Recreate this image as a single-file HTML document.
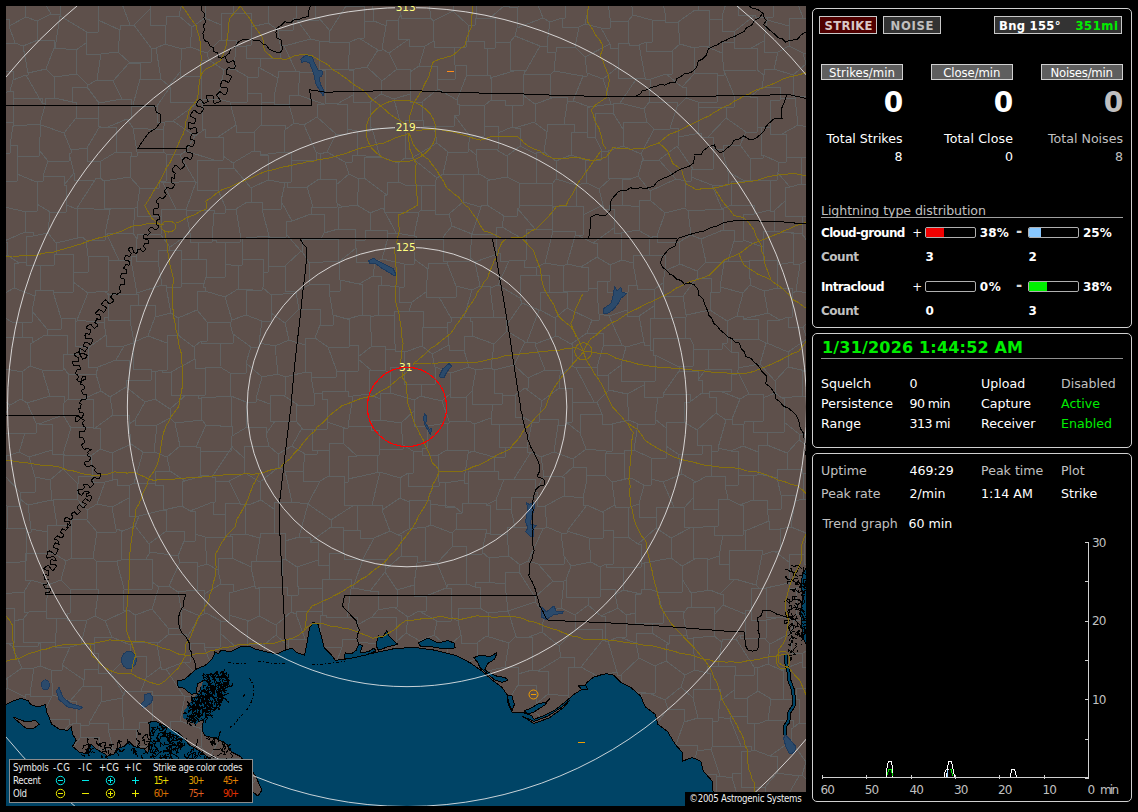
<!DOCTYPE html>
<html><head><meta charset="utf-8"><title>Lightning Detector</title>
<style>
html,body{margin:0;padding:0;background:#000;}
body{width:1138px;height:812px;position:relative;overflow:hidden;font-family:"DejaVu Sans","Liberation Sans",sans-serif;}
.t{position:absolute;white-space:pre;line-height:normal;margin:0;padding:0;}
.b{position:absolute;box-sizing:content-box;}
.panel{position:absolute;border:1px solid #d0d0d0;border-radius:5px;background:#000;}
svg{position:absolute;display:block;}
</style></head><body>
<svg style="left:0;top:0" width="1138" height="812" viewBox="0 0 1138 812" shape-rendering="crispEdges">
<defs><clipPath id="mc"><rect x="6" y="6" width="800" height="800"/></clipPath></defs>
<rect x="6" y="6" width="800" height="800" fill="#5e504b"/>
<g clip-path="url(#mc)" fill="none" stroke-width="1" stroke-linejoin="round">
<path d="M-6 446L7 456M25 433L19 452M25 433L3 433L3 419M3 419L-5 424M7 456L19 452M3 419L10 405M-10 392L10 405M6 679L-8 669M6 679L7 679L7 688M7 688L-3 702M-13 500L0 475M0 475L-25 474M3 474L7 456M3 474L0 474L0 475M7 785L6 803M7 785L-13 785L-13 775M6 803L-11 811M-13 775L5 752M5 752L-18 752L-18 740M6 803L18 809M18 809L22 824M372 505L380 472M372 505L382 505L382 510M380 472L400 478M382 510L400 498M400 478L400 498M12 646L38 646L38 643M12 646L22 668M38 643L40 643L40 666M22 668L34 668L34 668M34 668L40 666M6 679L22 668M-9 649L8 643M8 643L12 646M-9 535L3 528M-13 500L7 506M3 528L7 528L7 506M3 474L20 492M20 492L20 492L20 499M7 506L20 506L20 499M372 505L357 506M382 510L390 531M390 531L374 538M374 538L360 538L360 530M360 530L357 530L357 506M7 785L24 785L24 777M18 809L30 798M30 798L24 798L24 777M679 371L698 371L698 380M679 371L663 394M663 394L690 394L690 402M698 380L702 380L702 393M690 402L702 393M698 380L706 369M702 393L709 393L709 397M720 391L709 391L709 397M720 391L731 391L731 374M706 369L731 369L731 374M764 291L768 313M764 291L778 288M788 317L792 317L792 294M788 317L780 320M780 320L768 313M778 288L792 288L792 294M820 295L796 291M803 327L819 310M803 327L788 327L788 317M796 291L792 294M819 129L798 125M813 157L786 157L786 150M798 125L782 134M782 134L786 134L786 150M-5 175L5 181M5 181L-0 181L-0 206M25 433L36 433L36 423M21 399L10 405M21 399L27 403M27 403L36 423M19 452L29 457M36 423L39 423L39 424M39 424L52 424L52 450M52 450L29 457M20 492L35 492L35 477M29 457L35 477M22 337L32 337L32 343M22 337L-5 337L-5 350M32 343L30 343L30 366M-5 350L6 369M6 369L22 372M22 372L30 366M12 322L32 322L32 311M12 322L22 322L22 337M45 335L32 343M45 335L47 335L47 329M47 329L32 311M12 322L0 315M-3 317L0 317L0 315M45 335L67 335L67 354M42 370L63 370L63 367M42 370L30 366M67 354L63 354L63 367M-4 376L6 369M21 399L22 399L22 372M42 370L50 396M50 396L27 403M251 504L261 500M251 504L245 504L245 534M273 533L260 533L260 538M273 533L274 533L274 509M245 534L260 538M261 500L274 509M240 503L229 481M240 503L225 503L225 514M225 514L213 514L213 502M213 502L215 502L215 481M229 481L215 481M251 504L240 504L240 503M261 500L260 500L260 482M260 482L245 473M229 481L245 473M608 773L610 773L610 747M608 773L628 781M628 741L610 741L610 747M628 741L642 753M642 753L639 753L639 771M628 781L639 781L639 771M642 753L660 753L660 746M673 773L671 773L671 748M673 773L652 773L652 777M660 746L671 746L671 748M652 777L639 777L639 771M655 726L668 709M655 726L660 726L660 746M668 709L684 709L684 722M671 748L676 745M676 745L684 722M166 531L149 544M166 531L184 531L184 541M150 552L149 544M150 552L178 556M184 541L178 556M353 588L370 591M353 588L351 589M351 589L347 617M370 591L378 591L378 610M347 617L357 617L357 625M357 625L372 617M378 610L372 617M5 752L6 752M-2 716L13 725M6 752L13 725M24 777L25 774M25 774L6 774L6 752M6 752L6 752L6 752M43 802L57 802L57 794M43 802L40 802L40 823M65 799L66 830M65 799L57 794M30 798L43 798L43 802M25 774L44 774L44 767M54 782L44 767M54 782L57 794M430 504L431 525M430 504L455 507M431 525L452 533M455 507L462 513M462 513L456 513L456 529M456 529L452 533M390 531L398 535M400 498L409 502M409 502L409 529M409 529L398 535M428 500L409 500L409 502M428 500L430 500L430 504M431 525L426 527M409 529L426 527M651 458L634 450M651 458L666 458L666 446M634 450L638 424M666 446L666 428M666 428L655 419M638 424L655 424L655 419M658 397L655 419M658 397L663 397L663 394M690 402L684 402L684 422M684 422L666 422L666 428M606 451L607 453M606 451L612 451L612 424M612 424L629 420M629 420L638 424M634 450L624 450L624 454M607 453L624 454M612 482L605 475M612 482L615 505M605 475L586 475L586 484M615 505L602 512M602 512L587 505M586 484L583 498M587 505L583 505L583 498M631 478L624 478L624 454M631 478L612 482M607 453L605 453L605 475M606 451L586 449M586 449L573 459M573 459L573 459L573 467M573 467L586 467L586 484M674 507L663 482M674 507L656 507L656 517M656 517L639 517L639 504M639 504L644 485M644 485L651 485L651 479M663 482L651 479M630 507L639 504M630 507L615 507L615 505M631 478L644 485M651 458L651 458L651 479M682 474L678 454M682 474L663 482M678 454L666 446M827 636L809 636L809 616M829 603L809 603L809 616M714 526L693 528M714 526L718 526L718 509M718 509L693 509L693 498M692 527L693 527L693 528M692 527L684 527L684 508M684 508L693 498M707 476L696 482M707 476L725 476L725 485M696 482L693 482L693 498M728 499L725 485M728 499L718 499L718 509M656 528L656 517M656 528L671 538M671 538L692 527M674 507L684 507L684 508M682 474L696 482M671 538L671 538L671 558M697 558L682 566M697 558L693 558L693 528M671 558L682 566M821 564L804 564L804 554M804 554L806 533M806 533L814 530M788 469L787 469L787 453M788 469L777 469L777 478M787 453L767 445M777 478L759 474M759 474L758 474L758 452M767 445L758 445L758 452M768 432L784 432L784 422M768 432L767 432L767 445M799 440L787 453M799 440L799 434M799 434L784 422M743 446L731 451M743 446L758 452M731 451L738 451L738 475M738 475L757 475M757 475L759 474M768 432L753 432L753 421M743 446L744 424M753 421L744 421L744 424M728 499L740 505M725 485L738 485L738 475M757 475L753 475L753 500M740 505L753 500M723 535L714 535L714 526M723 535L743 535L743 530M740 505L743 505L743 530M825 70L806 64M806 64L803 53M803 53L819 53L819 32M798 125L795 98M812 96L797 96M795 98L797 96M806 64L793 75M797 96L793 96L793 75M544 476L562 476L562 477M544 476L535 492M562 477L564 477L564 496M564 496L545 506M545 506L537 506L537 497M535 492L537 492L537 497M541 457L544 476M541 457L554 452M554 452L573 459M573 467L562 477M541 457L531 452M531 452L514 479M514 479L535 479L535 492M583 498L564 496M477 503L462 503L462 513M477 503L468 503L468 483M468 483L464 483L464 480M455 507L445 507L445 483M464 480L445 483M708 349L722 349L722 343M708 349L693 349L693 344M722 343L727 343L727 321M727 321L710 310M710 310L686 315M693 344L690 338M690 338L685 338L685 317M685 317L686 317L686 315M677 366L679 366L679 371M677 366L693 366L693 344M706 369L708 369L708 349M737 316L743 316L743 319M737 316L727 321M743 319L758 319L758 339M758 339L731 339L731 352M731 352L722 343M753 421L763 421L763 398M744 424L732 424L732 419M740 399L732 419M740 399L749 394M749 394L763 394L763 398M720 391L740 399M731 374L737 374L737 370M749 394L737 370M731 352L738 352L738 368M737 370L738 370L738 368M782 398L784 398L784 422M782 398L775 393M775 393L763 398M810 400L818 400L818 418M810 400L829 387M782 398L802 396M802 396L810 396L810 400M799 434L818 434L818 418M818 363L806 371M806 371L802 371L802 396M799 440L812 449M830 445L812 449M702 445L697 445L697 430M702 445L711 445L711 451M711 451L718 451L718 448M718 448L726 420M697 430L716 413M716 413L726 420M684 422L697 430M678 454L702 454L702 445M707 476L711 476L711 451M731 451L718 448M732 419L726 420M709 397L716 397L716 413M683 296L697 278M683 296L686 315M710 310L711 292M697 278L711 278L711 292M701 239L706 262M701 239L691 235M691 235L679 242M679 242L680 264M680 264L697 271M697 271L706 262M688 211L722 209M688 211L691 235M701 239L723 230M722 209L723 209L723 230M750 180L777 180L777 172M750 180L750 158M777 172L778 172L778 162M778 162L763 155M750 158L763 158L763 155M22 211L-0 206M22 211L25 211L25 232M-6 235L2 235L2 242M2 242L25 232M40 265L54 265L54 254M40 265L26 265L26 262M48 233L56 243M48 233L33 236M33 236L26 236L26 262M54 254L56 254L56 243M-11 271L7 255M-9 284L5 284L5 293M19 263L7 255M19 263L14 263L14 288M14 288L5 293M2 242L7 242L7 255M0 315L5 315L5 293M25 232L33 232L33 236M26 262L19 262L19 263M49 290L35 290L35 296M49 290L40 290L40 265M35 296L14 288M35 296L32 311M81 644L94 644L94 653M81 644L87 620M112 637L94 637L94 653M112 637L105 621M105 621L95 616M87 620L95 616M81 644L70 647M70 647L55 647L55 633M55 633L56 633L56 618M56 618L67 618L67 613M87 620L67 620L67 613M112 637L130 645M105 621L128 610M135 642L130 645M135 642L135 642L135 615M135 615L128 610M95 616L98 594M67 613L70 613L70 589M70 589L93 589M93 589L98 589L98 594M128 610L123 610L123 590M98 594L123 594L123 590M163 510L166 510L166 531M163 510L139 516M149 544L135 526M135 526L139 516M185 481L170 471M185 481L182 481L182 506M170 471L155 471L155 485M155 485L163 485L163 510M163 510L182 506M190 511L213 502M190 511L182 506M205 475L185 481M205 475L212 477M212 477L215 477L215 481M163 510L163 510L163 510M134 483L130 485M134 483L155 483L155 485M130 485L129 485L129 498M139 516L129 516L129 498M190 511L195 511L195 534M184 541L195 541L195 534M143 452L134 483M143 452L154 452L154 452M170 471L167 457M154 452L167 457M205 475L200 475L200 451M196 447L200 447L200 451M196 447L180 446M167 457L180 446M202 420L175 423M202 420L206 425M206 425L196 447M180 446L175 423M97 504L112 507M97 504L105 482M130 485L117 485L117 479M129 498L112 507M105 482L117 479M143 452L131 444M117 479L112 479L112 453M131 444L112 453M105 482L93 482L93 476M93 476L91 456M91 456L100 449M100 449L112 453M83 399L93 399L93 427M83 399L68 399L68 399M64 403L63 415M64 403L68 399M63 415L71 428M71 428L93 427M69 375L68 375L68 399M69 375L96 374M96 374L101 391M101 391L83 399M50 396L64 396L64 403M39 424L63 415M63 367L69 375M63 454L52 454L52 450M63 454L71 428M63 454L64 454L64 455M64 455L91 456M95 428L100 428L100 449M95 428L93 428L93 427M202 420L201 420L201 398M201 398L231 396M206 425L220 425L220 426M220 426L231 426L231 396M231 396L231 396L231 396M220 367L221 343M220 367L205 368M205 368L195 368L195 359M221 343L201 343L201 341M195 359L194 359L194 347M201 341L194 347M201 398L198 398L198 395M198 395L205 395L205 368M230 373L231 396M230 373L220 367M186 395L198 395L198 395M186 395L171 395L171 372M171 372L195 359M505 667L509 643M505 667L518 667L518 674M509 643L516 636M529 637L516 637L516 636M529 637L532 637L532 670M518 674L532 670M561 657L574 657L574 667M561 657L538 671M574 667L568 667L568 696M538 671L548 671L548 694M568 696L548 694M658 800L639 800L639 806M658 800L666 800L666 802M666 802L665 827M640 824L639 806M658 800L652 777M628 781L630 798M630 798L639 798L639 806M630 507L628 507L628 537M656 528L638 544M638 544L628 537M652 623L663 623L663 611M652 623L652 633M663 611L683 611L683 614M683 614L687 635M687 635L669 635L669 644M669 644L652 633M665 700L681 687M665 700L649 693M649 693L655 693L655 666M655 666L666 661M666 661L685 675M681 687L685 675M693 638L687 638L687 635M693 638L695 670M669 644L666 644L666 661M685 675L695 670M663 611L657 592M683 614L688 607M657 592L682 592L682 579M682 579L691 593M688 607L691 607L691 593M735 579L729 579L729 564M735 579L720 594M720 594L710 590M710 590L707 590L707 560M729 564L719 564L719 556M719 556L707 560M756 585L735 579M756 585L762 555M752 550L762 550L762 555M752 550L729 550L729 564M697 558L707 558L707 560M682 579L682 566M691 593L710 590M723 535L719 556M752 550L745 550L745 531M743 530L745 530L745 531M492 670L478 670L478 658M492 670L483 689M483 689L468 688M468 688L458 688L458 666M478 658L458 666M505 667L492 670M509 643L486 636M477 643L486 636M477 643L478 658M453 546L452 533M453 546L437 563M426 527L425 527L425 561M437 563L425 561M453 546L466 546L466 554M467 584L466 584L466 554M467 584L447 584L447 587M437 563L447 587M273 533L285 533L285 541M292 502L274 502L274 509M292 502L308 504M308 504L299 537M285 541L299 537M331 527L310 542M331 527L343 527L343 545M344 553L343 545M344 553L329 553L329 565M310 542L318 542L318 560M329 565L318 565L318 560M331 520L331 527M331 520L308 504M308 504L308 504L308 504M299 537L310 537L310 542M360 530L343 530L343 545M354 505L357 505L357 506M354 505L331 520M374 538L363 559M363 559L363 559L363 559M363 559L344 559L344 553M363 559L353 588M329 579L351 579L351 589M329 579L329 565M225 514L225 514L225 532M195 534L205 537M205 537L225 537L225 532M245 534L230 534L230 536M230 536L225 536L225 532M183 695L152 695L152 700M183 695L166 669M166 669L161 669L161 667M161 667L146 678M146 678L141 691M141 691L152 691L152 700M128 656L130 656L130 645M128 656L146 656L146 678M135 642L157 642L157 644M157 644L161 667M38 642L38 643M38 642L55 642L55 633M70 647L62 665M40 666L51 670M51 670L62 670L62 665M802 473L813 473L813 470M802 473L803 473L803 499M803 499L817 499L817 502M812 449L813 470M788 469L802 469L802 473M547 527L543 529M547 527L545 506M543 529L515 527M537 497L511 497L511 509M515 527L511 509M504 479L514 479L514 479M504 479L496 500M511 509L496 509L496 500M504 479L498 479L498 471M477 503L486 503L486 505M498 471L468 471L468 483M496 500L486 505M508 611L535 602M508 611L516 636M529 637L542 632M535 602L544 612M544 612L542 632M561 657L559 646M538 671L532 670M559 646L542 632M484 582L475 582L475 587M484 582L505 584M475 587L480 587L480 608M505 584L508 611M508 611L488 613M488 613L480 608M508 611L508 611M535 602L535 597M535 597L519 572M519 572L505 572L505 584M486 636L488 636L488 613M477 643L461 643L461 635M480 608L458 608L458 621M458 621L461 635M836 664L808 664L808 667M808 667L802 667L802 662M827 636L803 653M803 653L802 662M812 688L796 688L796 699M812 688L827 695M796 699L799 699L799 723M799 723L823 724M812 688L808 667M718 666L735 666L735 675M718 666L722 642M735 675L754 675L754 667M754 667L736 639M736 639L722 639L722 642M718 666L707 666L707 673M693 638L714 636M707 673L695 670M722 642L714 636M688 607L714 607L714 615M714 636L714 615M720 594L723 594L723 605M723 605L714 615M794 620L800 620L800 614M794 620L781 617M800 614L796 614L796 588M781 617L766 617L766 588M796 588L789 588L789 583M789 583L766 588M809 616L800 614M803 653L791 653L791 633M791 633L794 620M816 581L796 588M804 554L789 554L789 562M789 562L789 562L789 583M789 562L774 551M774 551L762 555M759 588L766 588L766 588M759 588L756 585M671 558L644 563M657 592L650 589M650 589L644 589L644 563M638 544L641 544L641 561M644 563L641 563L641 561M780 529L769 529L769 521M780 529L791 527M791 527L795 501M769 521L767 509M767 509L781 509L781 495M781 495L795 495L795 501M774 551L780 551L780 529M745 531L769 521M806 533L791 527M803 499L795 501M753 500L767 500L767 509M777 478L781 495M803 18L815 22M803 18L789 18L789 26M803 53L789 46M789 46L789 26M663 3L649 -8M663 3L681 3L681 -16M750 97L762 87M750 97L757 97L757 127M762 87L780 87L780 100M780 100L770 100L770 127M770 127L761 127L761 128M757 127L761 127L761 128M724 107L726 107L726 118M724 107L734 107L734 95M726 118L746 132M734 95L750 97M746 132L757 132L757 127M782 134L770 134L770 127M795 98L780 98L780 100M778 162L786 162L786 150M763 155L761 155L761 128M750 158L740 145M740 145L746 132M766 17L755 17L755 15M766 17L773 17L773 0M755 15L738 15L738 -6M759 -22L773 -22L773 0M803 18L794 -7M766 17L767 17L767 20M767 20L789 26M773 0L794 -7M195 -6L182 -6L182 2M182 2L162 2L162 -4M-5 1L1 1L1 -6M428 500L433 486M400 478L408 473M433 486L408 486L408 473M445 483L439 482M433 486L439 486L439 482M688 211L685 208M685 208L665 213M679 242L657 242L657 236M657 236L665 213M260 482L279 467M292 502L285 471M279 467L285 471M247 427L232 436M247 427L266 427L266 434M269 446L266 434M269 446L244 446L244 458M244 458L232 447M232 436L231 436L231 446M231 446L232 446L232 447M220 426L232 426L232 436M246 402L231 396M246 402L247 427M245 473L244 473L244 458M278 454L279 467M278 454L269 446M212 477L232 447M200 451L231 451L231 446M454 47L466 47L466 41M454 47L434 47L434 41M466 41L468 41L468 25M434 41L433 21M433 21L453 11M453 11L468 25M171 372L162 372L162 370M162 370L167 370L167 343M194 347L178 335M178 335L167 335L167 343M198 259L181 259L181 259M198 259L206 259L206 277M181 259L181 259L181 283M181 283L203 283L203 287M206 277L203 287M169 250L181 250L181 259M169 250L170 247M204 242L190 242L190 233M204 242L198 242L198 259M190 233L170 247M169 250L158 250L158 261M158 261L162 285M162 285L166 285L166 287M166 287L181 287L181 283M204 242L212 242L212 240M212 240L216 240L216 242M206 277L225 277L225 264M216 242L225 242L225 264M67 354L80 354L80 346M98 367L96 374M98 367L88 367L88 348M88 348L80 346M47 329L61 329L61 318M49 290L53 290L53 292M53 292L61 318M80 346L75 346L75 321M61 318L75 318L75 321M137 207L135 208M137 207L140 188M135 208L111 208M111 208L104 208L104 181M104 181L130 177M140 188L130 177M803 327L807 339M816 345L807 339M760 364L775 381M760 364L766 343M767 343L766 343M767 343L788 352M788 352L788 367M788 367L775 381M738 368L760 364M775 393L775 381M758 339L766 343M780 320L767 320L767 343M768 313L743 319M807 339L788 352M806 371L788 367M811 216L819 214M811 216L785 216L785 201M819 214L811 189M790 187L785 187L785 201M790 187L801 184M801 184L811 184L811 189M834 185L811 189M813 157L801 157L801 184M777 172L790 187M802 234L814 250M802 234L780 232M780 232L793 232L793 262M814 257L800 264M800 264L793 264L793 262M811 216L802 216L802 234M796 291L800 264M778 288L777 265M777 265L793 262M728 261L724 261L724 263M728 261L749 261L749 278M724 263L720 287M720 287L743 293M749 278L750 278L750 285M750 285L743 293M706 262L724 263M723 230L734 230L734 241M734 241L728 261M697 278L697 278L697 271M711 292L720 292L720 287M737 316L743 293M764 291L750 285M765 260L777 260L777 265M765 260L749 260L749 278M724 107L698 107L698 102M726 118L708 137M708 137L701 137L701 133M701 133L698 133L698 102M682 87L686 87L686 98M682 87L666 74M649 102L677 102L677 107M649 102L651 79M666 74L651 79M677 107L686 98M682 87L695 73M686 98L698 102M698 102L717 102L717 75M695 73L717 73L717 75M734 95L724 71M724 71L724 71M698 102L698 102M717 75L724 75L724 71M754 214L770 210M754 214L743 214L743 240M779 231L763 231L763 247M779 231L774 231L774 211M774 211L770 211L770 210M763 247L743 240M745 181L749 180M745 181L731 181L731 205M749 180L770 180L770 210M731 205L754 205L754 214M722 209L722 209M722 209L731 205M734 241L743 241L743 240M765 260L763 260L763 247M780 232L779 231M785 201L774 211M750 180L749 180M26 17L25 -8M26 17L37 21M38 -9L51 14M37 21L51 14M158 261L136 261L136 256M162 285L137 293M137 293L131 260M136 256L131 256L131 260M170 247L160 234M160 234L137 234L137 239M136 256L137 239M160 234L161 234L161 216M161 216L137 216L137 207M135 208L133 233M137 239L133 233M52 500L53 500M52 500L50 480M53 500L77 499M50 480L63 469M63 469L78 484M78 484L77 484L77 499M20 499L28 505M35 477L50 480M28 505L52 500M86 519L87 519L87 510M86 519L71 519L71 526M87 510L77 499M71 526L57 525M57 525L53 500M64 455L63 469M93 476L78 476L78 484M97 504L87 510M135 615L152 609M157 644L169 634M169 634L168 634L168 628M168 628L152 609M72 558L71 558L71 526M72 558L93 558M86 519L97 532M93 558L97 532M112 507L116 529M97 532L116 532L116 529M135 526L123 531M116 529L123 531M124 589L117 562M124 589L152 589L152 582M146 559L121 559L121 560M146 559L152 559L152 582M121 560L117 560L117 562M93 589L96 589L96 561M123 590L124 590L124 589M96 561L117 561L117 562M152 609L159 587M159 587L152 582M150 552L146 559M123 531L121 531L121 560M178 556L180 562M180 562L169 586M169 586L159 587M93 558L96 561M8 643L14 643L14 621M-6 608L14 608L14 621M38 642L23 642L23 619M14 621L23 619M56 618L46 618L46 611M46 611L29 612M23 619L29 612M70 589L61 580M46 611L48 585M48 585L61 580M72 558L66 561M61 580L66 561M186 395L170 409M162 370L158 371M158 371L155 371L155 399M155 399L170 409M154 452L157 425M175 423L170 418M157 425L170 418M170 409L170 409L170 418M113 415L129 415L129 424M113 415L110 397M110 397L126 387M126 387L145 402M145 402L135 420M129 424L135 420M131 444L129 424M95 428L113 415M101 391L110 397M98 367L116 360M116 360L129 360L129 380M129 380L126 380L126 387M158 371L151 371L151 369M129 380L151 380L151 369M155 399L145 402M157 425L135 425L135 420M216 242L240 242L240 233M225 264L231 265M246 238L242 238L242 259M246 238L240 238L240 233M231 265L242 265L242 259M596 719L588 719L588 702M596 719L574 728M588 702L569 702L569 698M569 698L565 715M574 728L565 728L565 715M665 700L668 709M655 726L641 726L641 722M649 693L646 693M646 693L641 693L641 722M628 741L629 741L629 727M601 742L610 742L610 747M601 742L599 721M599 721L618 721L618 713M618 713L629 727M641 722L629 727M518 674L518 674L518 685M548 694L536 704M518 685L536 685L536 704M484 690L483 690L483 689M484 690L504 690L504 707M518 685L504 707M568 696L569 698M547 723L534 711M547 723L565 715M534 711L536 704M472 724L484 690M472 724L501 724L501 723M504 707L507 707L507 718M501 723L507 718M534 711L514 720M514 720L507 718M547 723L545 743M514 720L530 720L530 747M545 743L530 747M547 527L561 533M587 505L567 531M561 533L567 533L567 531M600 567L591 562M600 567L606 564M606 564L613 564L613 538M591 562L589 538M589 538L603 538L603 530M603 530L613 530L613 538M628 537L613 538M625 567L641 567L641 561M625 567L606 567L606 564M602 512L603 512L603 530M567 531L589 538M652 633L636 633L636 643M655 666L639 658M639 658L636 643M408 617L394 607M408 617L406 633M394 607L378 610M372 617L396 617L396 642M406 633L396 642M359 642L357 642L357 639M359 642L394 646M357 639L357 639L357 625M394 646L396 646L396 642M443 719L435 713M443 719L455 719L455 719M455 719L457 696M435 713L428 699M457 696L436 696L436 684M428 699L436 684M472 724L466 724L466 727M466 727L455 719M468 688L457 696M446 588L426 596M446 588L451 588L451 617M437 621L451 621L451 617M437 621L419 611M419 611L426 611L426 596M467 584L475 587M447 587L446 588M458 621L451 617M401 556L417 556L417 563M401 556L385 570M417 563L414 585M385 572L385 572L385 570M385 572L397 590M397 590L414 585M398 535L401 535L401 556M425 561L417 563M363 559L385 559L385 570M426 596L414 596L414 585M370 591L385 572M394 607L397 607L397 590M408 617L419 611M416 724L416 724L416 744M416 724L435 724L435 713M443 719L430 719L430 742M416 744L430 742M465 740L448 752M465 740L466 727M430 742L448 752M416 724L400 724L400 708M428 699L402 699L402 701M402 701L400 701L400 708M428 823L427 798M397 828L398 801M427 798L407 793M407 793L398 793L398 801M270 587L282 587L282 561M270 587L287 587L287 595M287 595L298 595L298 586M298 586L297 586L297 567M297 567L285 559M285 559L282 559L282 561M329 579L322 579L322 588M318 560L297 567M322 588L298 588L298 586M285 541L285 559M260 538L256 561M256 561L282 561L282 561M168 628L181 628L181 608M169 586L178 592M178 592L181 608M184 662L190 662L190 643M184 662L166 669M169 634L186 634L186 639M186 639L190 643M181 608L200 616M186 639L200 616M256 561L251 561L251 567M230 536L232 536L232 558M232 558L251 567M455 826L457 802M434 793L456 801M434 793L427 798M457 802L456 802L456 801M467 835L489 835L489 800M489 800L489 800M457 802L489 802L489 800M434 793L436 793L436 772M436 772L445 772L445 767M445 767L462 777M456 801L462 801L462 777M347 617L326 617L326 615M322 588L322 588L322 611M326 615L322 615L322 611M364 663L352 663L352 672M364 663L359 642M352 672L335 667M357 639L342 639L342 647M342 647L335 667M326 615L320 615L320 640M342 647L320 647L320 640M128 656L111 673M141 691L124 691L124 695M124 695L111 673M94 653L98 653L98 669M111 673L98 673L98 669M62 665L84 680M98 669L84 669L84 680M51 670L53 695M53 695L70 701M70 701L83 686M84 680L83 686M192 805L183 815M192 805L188 805L188 780M183 815L171 815L171 804M171 804L171 783M188 780L171 780L171 783M151 807L155 830M151 807L142 807L142 798M142 798L130 808M130 808L126 808L126 830M171 804L151 804L151 807M65 799L89 799L89 793M97 829L98 802M89 793L98 802M130 808L105 800M98 802L105 802L105 800M7 688L25 697M13 725L27 725L27 722M27 722L25 697M34 668L30 694M53 695L52 695L52 696M52 696L30 696L30 694M30 694L25 694L25 697M507 534L490 534L490 529M507 534L509 556M509 556L489 558M486 533L482 552M486 533L490 533L490 529M489 558L482 552M515 527L507 527L507 534M486 505L490 505L490 529M543 529L528 561M528 561L520 565M520 565L509 556M519 572L520 565M484 582L489 582L489 558M456 529L486 529L486 533M466 554L482 554L482 552M538 564L553 581M538 564L564 564L564 556M564 556L571 566M571 566L566 580M553 581L564 581M564 581L566 580M528 561L538 564M535 597L553 581M561 533L564 556M591 562L571 566M590 597L600 597L600 589M590 597L566 597L566 580M600 589L600 589L600 567M561 608L544 612M561 608L564 581M576 629L575 615M576 629L602 629L602 641M601 616L605 616L605 640M601 616L588 605M588 605L575 615M602 641L605 640M561 608L575 615M559 646L576 629M574 667L581 667L581 667M581 667L602 641M590 597L588 597L588 605M757 668L768 664M757 668L758 691M768 664L781 670M781 670L783 670L783 692M758 691L771 699M771 699L783 699L783 692M735 675L734 690M754 667L757 667L757 668M747 698L734 698L734 690M747 698L758 691M802 662L781 670M791 633L770 644M770 644L768 664M796 699L783 699L783 692M760 723L747 723L747 716M760 723L768 720M768 720L771 699M747 698L747 698L747 716M768 720L793 720L793 728M799 723L793 728M764 638L740 638L740 635M764 638L766 638L766 620M740 635L745 635L745 614M766 620L751 620L751 610M751 610L745 610L745 614M770 644L764 638M736 639L740 635M781 617L766 620M723 605L745 614M759 588L751 588L751 610M770 756L777 756L777 773M770 756L791 741M777 773L799 776M791 741L806 762M806 762L802 775M802 775L799 775L799 776M760 723L754 723L754 750M793 728L791 728L791 741M754 750L770 756M824 754L806 762M819 793L802 775M754 750L751 750L751 751M747 716L730 716L730 719M730 719L741 746M741 746L751 746L751 751M765 787L777 773M765 787L741 787L741 773M751 751L741 751L741 773M710 689L693 689L693 698M710 689L720 689L720 701M720 701L718 717M693 698L698 718M698 718L712 718L712 721M712 721L718 721L718 717M681 687L693 698M707 673L710 673L710 689M734 690L720 701M730 719L718 717M684 722L698 718M676 745L697 745L697 751M697 751L711 749M712 747L711 747L711 749M712 747L712 721M741 746L712 746L712 747M615 595L618 608M615 595L623 590M623 590L641 594M641 594L635 594L635 613M618 608L626 615M635 613L626 615M600 589L615 589L615 595M601 616L618 608M625 567L623 567L623 590M650 589L641 589L641 594M652 623L635 623L635 613M619 637L608 641M619 637L626 637L626 615M608 641L605 641L605 640M636 643L619 637M778 52L764 52L764 41M778 52L774 69M774 69L764 69L764 75M751 48L757 48L757 70M751 48L764 41M764 75L757 70M789 46L778 52M767 20L764 41M793 75L774 69M762 87L764 75M724 71L757 70M755 15L735 31M751 48L734 48L734 42M735 31L734 31L734 42M724 71L722 53M734 42L722 42L722 53M694 48L695 73M694 48L705 46M705 46L722 53M735 31L722 31L722 16M705 46L709 46L709 19M709 19L722 19L722 16M77 74L76 74L76 50M77 74L54 77M76 50L55 48M54 77L46 69M46 69L54 48M55 48L54 48M-16 100L10 91M10 91L13 80M-18 78L2 71M2 71L13 71L13 80M10 91L13 91L13 98M13 98L42 98L42 103M42 103L26 75M13 80L26 75M38 40L54 40L54 48M38 40L23 46M46 69L28 73M23 46L28 73M55 98L45 98L45 105M55 98L54 77M42 103L45 103L45 105M26 75L28 75L28 73M531 452L527 452L527 447M498 471L494 471L494 457M494 457L505 457L505 447M505 447L527 447L527 447M629 420L627 394M658 397L644 397L644 385M627 394L644 385M685 208L686 181M665 213L650 200M686 181L676 179M676 179L650 191M650 191L650 191L650 200M308 504L320 481M285 471L303 471M320 481L303 481L303 471M278 454L292 446M292 446L305 454M303 471L305 454M166 287L171 313M171 313L178 318M178 318L197 310M203 287L205 287L205 291M205 291L197 291L197 310M231 265L238 265L238 289M238 289L225 297M205 291L225 297M201 341L207 341L207 322M178 335L178 318M197 310L207 322M167 343L148 336M171 313L155 317M148 336L155 317M137 293L136 293L136 294M136 294L138 294L138 305M138 305L155 305L155 317M88 85L97 80M88 85L77 74M97 80L101 54M76 50L86 43M101 54L86 54L86 43M97 80L113 81M129 62L118 52M129 62L129 63M113 81L129 63M101 54L118 52M156 48L165 44M156 48L151 48L151 48M151 48L134 25M165 44L166 25M166 25L150 25L150 9M150 9L134 25M179 16L182 2M179 16L166 16L166 25M151 -1L150 9M129 62L151 62L151 48M129 63L140 63L140 79M156 48L161 79M140 79L161 79L161 79M186 210L186 210M186 210L214 210L214 213M186 210L196 182M218 190L225 206M218 190L197 190L197 182M196 182L197 182M214 213L225 213L225 206M190 233L186 210M176 209L186 210M176 209L161 209L161 216M212 240L214 213M240 233L236 209M236 209L225 209L225 206M54 254L73 254L73 272M53 292L73 292L73 282M73 272L73 282M75 321L77 321L77 320M77 320L88 293M73 282L88 293M176 209L163 183M196 182L195 181M195 181L163 183M140 188L159 188L159 181M163 183L159 181M649 102L644 109M651 79L645 79L645 77M644 109L620 103M620 103L637 78M637 78L645 78L645 77M680 44L672 51M680 44L678 22M672 51L646 51L646 42M646 42L652 42L652 20M678 22L665 22L665 13M652 20L665 20L665 13M666 74L672 74L672 51M694 48L680 44M695 10L709 10L709 19M695 10L678 22M645 77L639 45M639 45L646 42M663 3L665 13M695 10L698 10L698 -6M633 15L631 -1M633 15L652 20M693 169L691 169L691 177M693 169L713 169L713 149M691 177L712 185M712 185L728 185L728 172M728 172L723 153M713 149L723 149L723 153M722 209L712 185M686 181L691 181L691 177M745 181L728 172M740 145L723 145L723 153M708 137L713 137L713 149M676 179L659 160M693 169L677 146M659 160L677 146M647 122L644 109M647 122L654 129M677 107L670 128M654 129L670 129L670 128M701 133L678 137M670 128L678 128L678 137M677 146L678 146L678 137M10 145L13 126M10 145L17 145L17 156M17 156L39 156L39 150M13 126L14 126L14 126M14 126L40 124M39 150L41 125M41 125L40 125L40 124M-13 153L10 153L10 145M-5 122L13 122L13 126M5 181L17 181L17 174M17 174L17 174L17 156M13 98L14 126M45 105L40 124M88 85L87 87M113 81L122 99M122 99L99 103M87 87L99 103M55 98L72 102M87 87L72 87L72 102M86 240L105 240L105 234M86 240L88 256M88 256L108 256L108 268M107 235L119 260M107 235L105 234M119 260L108 260L108 268M56 243L82 237M82 237L86 240M73 272L88 272L88 256M104 291L88 293M104 291L108 291L108 268M131 260L119 260L119 260M133 233L107 233L107 235M111 208L110 210M110 210L105 234M136 294L107 294L107 293M107 293L104 291M-8 556L4 562M-4 599L0 594M4 562L0 594M29 612L24 612L24 592M0 594L24 592M48 585L31 580M24 592L31 580M53 553L25 553L25 564M53 553L47 553L47 532M47 532L31 529M20 561L25 561L25 564M20 561L26 561L26 532M26 532L31 532L31 529M66 561L53 553M31 580L25 580L25 564M57 525L47 525L47 532M28 505L31 529M4 562L20 562L20 561M3 528L26 528L26 532M262 321L259 343M262 321L246 315M246 315L232 320M251 347L259 347L259 343M251 347L233 334M233 334L230 324M230 324L232 320M238 289L253 290M253 290L246 290L246 315M225 297L232 320M230 373L246 373L246 363M221 343L233 343L233 334M246 363L251 347M207 322L230 322L230 324M628 691L621 700M628 691L621 691L621 675M621 700L597 695M621 675L617 675L617 672M617 672L597 676M597 695L597 676M646 693L628 691M618 713L621 700M639 658L621 675M599 721L596 721L596 719M588 702L597 702L597 695M608 641L617 672M581 667L597 676M499 745L509 753M499 745L478 745L478 755M509 753L501 775M478 755L480 755L480 770M480 770L489 770L489 778M501 775L489 778M501 723L499 723L499 745M530 747L527 751M527 751L509 753M465 740L478 740L478 755M527 751L529 774M529 774L522 774L522 781M522 781L501 781L501 775M448 752L445 752L445 767M462 777L480 770M489 800L489 800L489 778M522 781L522 800M522 800L500 800L500 808M489 800L500 808M559 750L553 774M559 750L572 750L572 747M553 774L574 776M572 747L575 747L575 749M575 749L583 749L583 767M583 767L574 776M545 743L559 750M529 774L550 778M550 778L553 778L553 774M574 728L572 747M601 742L575 742L575 749M608 773L601 773L601 776M601 776L583 776L583 767M550 778L556 778L556 800M574 776L575 797M575 797L556 800M522 800L534 800L534 809M534 809L554 809L554 803M556 800L554 803M534 809L531 821M554 803L563 803L563 830M394 657L419 669M394 657L382 657L382 673M419 669L399 669L399 693M399 693L383 682M382 673L383 682M364 663L382 663L382 673M394 646L394 657M402 701L399 693M400 708L390 717M366 694L383 682M366 694L373 694L373 716M373 716L390 716L390 717M354 692L352 692L352 672M354 692L366 694M434 635L448 647M434 635L420 641M420 641L427 668M448 647L446 663M446 663L434 670M434 670L427 670L427 668M461 635L448 647M437 621L434 635M406 633L420 641M419 669L427 668M458 666L446 663M436 684L434 670M404 748L412 748M404 748L394 772M412 748L421 748L421 766M421 766L406 766L406 785M406 785L394 772M394 743L390 743L390 717M394 743L404 748M416 744L412 748M394 743L373 749M373 749L371 749L371 774M371 774L394 774L394 772M436 772L421 772L421 766M407 793L406 785M371 774L370 776M398 801L381 801L381 795M381 795L370 795L370 776M195 590L204 590L204 594M195 590L197 590L197 567M204 594L221 584M221 584L218 570M218 570L207 564M197 567L207 564M178 592L195 590M200 616L206 613M206 613L204 613L204 594M180 562L197 562L197 567M205 537L207 564M232 558L218 558L218 570M251 567L255 586M221 584L233 584L233 592M233 592L255 586M270 587L258 588M258 588L255 588L255 586M322 611L296 611L296 614M320 640L316 640L316 642M316 642L305 639M305 639L296 614M287 595L291 595L291 612M291 612L296 614M500 808L501 822M316 642L315 663M335 667L332 667L332 668M332 668L315 668L315 663M224 795L232 800M224 795L224 795L224 792M224 792L242 792L242 768M232 800L242 799M242 799L258 776M242 768L258 776M193 774L188 780M193 774L204 774L204 769M211 805L224 795M211 805L192 805L192 805M204 769L224 769L224 792M266 808L276 792M266 808L242 799M265 776L276 776L276 782M265 776L258 776M276 782L276 782L276 792M354 692L339 692L339 700M332 668L331 668L331 695M339 700L331 695M32 724L41 719M32 724L41 746M41 719L69 719L69 725M69 725L46 751M41 746L46 751M27 722L32 724M52 696L41 719M6 752L41 752L41 746M70 701L76 701L76 723M76 723L69 725M44 767L48 757M48 757L46 751M48 757L65 757M76 723L80 723L80 725M80 725L81 737M65 757L81 737M54 782L83 782L83 770M65 757L83 770M89 793L90 771M83 770L90 771M193 774L168 749M168 749L158 749L158 756M171 783L155 778M158 756L155 778M142 798L143 798L143 786M155 778L143 786M113 749L129 749L129 750M113 749L99 749L99 762M99 762L98 762L98 763M98 763L123 763L123 780M129 750L132 780M123 780L132 780M81 737L99 737L99 762M90 771L98 763M105 800L123 780M136 746L129 750M136 746L158 746L158 756M143 786L132 780M89 723L108 723L108 729M89 723L101 702M108 729L123 729L123 717M101 702L122 698M122 698L123 717M80 725L89 725L89 723M113 749L108 729M83 686L101 686L101 702M139 729L123 729L123 717M139 729L136 729L136 746M124 695L122 695L122 698M153 722L152 722L152 700M153 722L139 722L139 729M821 797L812 797L812 807M805 824L812 824L812 807M799 776L784 802M812 807L784 807L784 802M666 802L679 796M690 820L692 820L692 806M692 806L679 796M673 773L678 779M679 796L678 779M697 751L691 774M678 779L691 774M633 15L628 21M639 45L629 45L629 43M628 21L629 43M637 78L618 78L618 67M618 67L618 67L618 48M629 43L618 43L618 48M722 16L728 -3M15 43L-1 43L-1 56M15 43L9 26M-3 19L9 19L9 26M2 71L-1 71L-1 56M23 46L15 43M26 17L9 26M38 40L37 21M253 151L254 151L254 132M253 151L233 163M254 132L236 132L236 125M236 125L218 137M218 137L223 137L223 156M233 163L223 156M214 160L223 160L223 156M214 160L197 160L197 182M234 168L218 168L218 190M234 168L233 163M505 447L499 447L499 424M499 424L523 424L523 417M527 447L532 422M532 422L523 417M586 449L580 433M612 424L602 424L602 414M602 414L580 414L580 433M627 394L609 390M602 414L597 402M609 390L597 402M677 366L655 355M644 385L644 385L644 381M644 381L655 381L655 355M690 338L653 338L653 350M655 355L653 355L653 350M685 317L674 317L674 318M674 318L650 318L650 345M653 350L650 350L650 345M674 318L654 318L654 306M654 306L639 316M639 316L644 342M650 345L644 345L644 342M657 236L652 236L652 238M652 238L638 230M650 200L639 200L639 207M638 230L639 230L639 207M650 191L638 176M659 160L643 160L643 158M638 176L643 158M654 129L641 154M641 154L643 158M647 122L623 122L623 129M623 129L623 129L623 146M641 154L623 146M253 151L260 151L260 155M254 132L261 125M261 125L285 125L285 130M285 130L284 130L284 152M260 155L284 152M283 395L270 395L270 404M283 395L285 395L285 377M262 377L278 374M262 377L256 399M256 399L270 404M285 377L278 374M246 363L262 377M275 346L259 343M275 346L278 374M246 402L256 402L256 399M266 434L275 421M275 421L270 421L270 404M292 446L302 428M305 454L317 454L317 450M317 450L312 450L312 429M312 429L302 429L302 428M275 421L296 421M283 395L298 405M298 405L296 405L296 421M302 428L296 421M490 78L517 70M490 78L491 78L491 100M491 100L505 100L505 105M517 70L524 70L524 74M524 74L523 74L523 95M505 105L523 105L523 95M433 21L431 18M453 11L454 -1M431 18L427 -10M133 343L124 346M133 343L134 342M134 342L130 320M124 346L106 346L106 335M130 320L108 320L108 317M106 335L104 323M108 317L104 317L104 323M116 360L124 346M151 369L133 369L133 343M148 336L134 342M138 305L130 305L130 320M88 348L106 335M107 293L108 293L108 317M77 320L104 323M247 202L251 202L251 188M247 202L262 202L262 209M251 188L268 180M262 209L281 209L281 201M268 180L285 183M281 201L285 183M236 209L247 202M234 168L251 188M269 236L246 238M269 236L262 209M260 155L268 155L268 180M287 182L291 182L291 160M287 182L285 183M284 152L291 152L291 160M195 181L180 155M159 181L166 181L166 154M166 154L180 155M214 160L186 151M186 151L180 155M104 181L100 178M130 177L131 156M116 152L131 152L131 156M116 152L101 161M101 161L100 178M17 174L34 181M39 150L48 161M48 161L43 176M34 181L43 181L43 176M22 211L37 211L37 204M34 181L37 181L37 204M48 233L50 212M37 204L50 212M76 118L98 118L98 123M76 118L64 133M64 133L71 150M100 126L87 148M100 126L98 126L98 123M87 148L71 150M72 102L76 102L76 118M99 103L98 123M41 125L64 133M48 161L69 161L69 153M69 153L71 153L71 150M108 127L116 127L116 152M108 127L100 127L100 126M101 161L87 161L87 148M307 187L319 179M307 187L313 207M319 179L336 179L336 185M336 185L337 203M313 207L337 207L337 203M592 797L584 799M592 797L607 811M584 799L580 833M607 811L606 831M601 776L592 797M575 797L584 799M630 798L607 798L607 811M337 830L354 830L354 808M377 831L365 812M354 808L365 812M381 795L365 812M370 776L360 776L360 778M360 778L349 798M349 798L354 798L354 808M276 782L277 781M276 792L300 809M308 779L277 781M308 779L313 779L313 803M300 809L313 809L313 803M349 798L337 796M337 796L319 796L319 806M319 806L331 806L331 832M258 588L259 588L259 616M291 612L276 625M259 616L276 625M305 639L288 639L288 646M276 625L276 625L276 635M288 646L276 635M220 633L237 648M220 633L221 621M221 621L229 621L229 615M229 615L249 621M249 621L247 621L247 639M237 648L247 648L247 639M190 643L204 643L204 647M206 613L221 621M204 647L220 647L220 633M233 592L229 592L229 615M259 616L249 621M265 644L276 635M265 644L247 644L247 639M249 671L237 671L237 666M249 671L262 661M237 666L237 648M262 661L265 644M236 830L232 800M266 808L267 808L267 825M211 805L212 826M315 663L307 668M331 695L308 695M307 668L308 695M288 646L289 663M307 668L289 663M262 661L285 665M289 663L285 663L285 665M264 691L257 687M264 691L280 685M249 671L257 687M285 665L280 685M199 728L201 728L201 747M199 728L180 721M201 747L171 742M180 721L170 721L170 730M170 730L171 730L171 742M168 749L171 742M204 769L209 756M209 756L201 747M185 696L183 695M185 696L180 721M153 722L170 730M209 756L211 756L211 755M242 768L238 758M238 758L211 758L211 755M280 685L297 685L297 697M308 695L308 695L308 695M297 697L308 697L308 695M360 778L342 766M337 796L330 776M330 776L342 776L342 766M308 779L311 779L311 775M313 803L319 806M330 776L311 775M739 800L726 816M739 800L732 778M726 816L708 816L708 800M708 800L716 800L716 780M732 778L720 776M720 776L716 776L716 780M692 806L708 800M691 774L716 774L716 780M741 773L732 773L732 778M711 749L720 776M778 805L777 805L777 822M778 805L765 805L765 792M765 792L751 802M751 802L756 828M784 802L778 805M765 787L765 787L765 792M739 800L751 802M434 41L425 46M425 46L409 46L409 39M431 18L401 18L401 15M409 39L398 39L398 20M401 15L398 20M230 102L247 102L247 93M230 102L236 125M261 125L261 102M247 93L261 93L261 102M289 104L294 123M289 104L274 104L274 97M285 130L294 123M261 102L274 102L274 97M304 125L317 117M304 125L316 152M317 117L336 134M336 134L327 152M327 152L320 154M316 152L320 154M298 95L324 104M298 95L289 95L289 104M324 104L317 104L317 117M294 123L304 125M291 160L316 160L316 152M307 187L287 187L287 182M319 179L320 179L320 154M409 39L389 53M398 20L386 20L386 26M386 26L382 49M389 53L382 49M300 72L298 95M300 72L319 72L319 69M324 104L325 104L325 103M319 69L320 69L320 70M320 70L325 70L325 103M554 452L558 425M532 422L539 422L539 419M539 419L558 419L558 425M580 433L566 422M558 425L566 425L566 422M464 480L468 454M439 482L438 455M438 455L447 450M447 450L468 450L468 454M494 457L472 451M472 451L468 454M499 424L491 424L491 418M491 418L474 424M472 451L474 451L474 424M680 264L665 271M652 238L649 238L649 255M649 255L665 255L665 271M683 296L663 296L663 283M665 271L663 283M654 306L655 289M663 283L655 289M609 390L608 375M644 381L621 381L621 365M608 375L621 365M644 342L626 347M621 365L626 347M639 207L622 205M638 176L631 179M631 179L622 179L622 205M408 473L413 473L413 451M438 455L422 455L422 448M413 451L422 451L422 448M447 450L447 450L447 423M447 423L427 426M422 448L427 448L427 426M285 377L306 372M298 405L314 405L314 393M306 372L311 372L311 377M314 393L311 377M590 107L587 107L587 132M590 107L611 104M613 113L613 105M613 113L595 113L595 137M595 137L587 137L587 132M611 104L613 104L613 105M623 129L613 113M620 103L613 103L613 105M603 79L618 67M603 79L611 104M468 25L475 25L475 18M475 18L476 18L476 -8M218 137L205 137L205 129M186 151L195 136M205 129L195 136M122 99L131 99L131 106M108 127L127 119M127 119L131 119L131 106M140 79L133 105M131 106L133 106L133 105M95 180L74 180L74 173M95 180L77 208M74 173L64 185M64 185L66 185L66 205M66 205L77 209M77 208L77 208L77 209M69 153L74 173M100 178L95 178L95 180M110 210L77 208M43 176L64 176L64 185M50 212L66 212L66 205M82 237L77 237L77 209M281 201L292 221M313 207L311 207L311 214M292 221L311 214M269 236L269 236L269 237M269 237L286 237L286 234M292 221L286 221L286 234M300 809L292 829M204 647L211 664M237 666L232 666L232 669M211 664L232 664L232 669M184 662L198 676M211 664L198 676M185 696L194 696L194 693M198 676L194 676L194 693M265 776L264 752M238 758L243 758L243 751M243 751L264 751L264 752M277 781L289 747M289 747L276 739M264 752L276 739M264 691L266 721M285 715L297 715L297 697M285 715L268 715L268 722M266 721L268 722M227 725L243 725M227 725L214 715M238 701L223 692M238 701L243 701L243 725M243 725L243 725L243 725M214 715L209 715L209 700M209 700L223 700L223 692M211 755L227 725M243 751L243 751L243 725M199 728L214 715M257 687L238 701M232 669L223 669L223 692M266 721L243 725M276 739L268 722M194 693L209 693L209 700M373 749L361 749L361 739M342 766L340 766L340 748M340 748L361 748L361 739M373 716L362 716L362 726M339 700L340 700L340 710M340 710L362 710L362 726M362 726L361 726L361 739M603 79L587 73M618 48L610 48L610 44M610 44L585 57M585 57L587 73M573 101L590 107M573 101L583 76M583 76L587 76L587 73M118 52L120 30M134 25L130 25M130 25L120 25L120 30M130 25L119 -4M88 -0L98 -0L98 7M71 -2L60 -2L60 15M98 7L98 7L98 20M60 15L60 15L60 16M60 16L87 32M87 32L98 32L98 20M114 -5L98 7M51 14L60 15M120 30L98 20M55 48L60 16M86 43L87 32M399 4L385 -5M399 4L416 -10M401 15L399 4M367 67L378 50M367 67L349 70M378 50L359 38M348 69L349 70M348 69L350 42M359 38L350 42M319 69L319 69L319 41M319 41L329 41L329 31M348 69L320 70M350 42L329 42L329 31M372 -4L374 21M347 -1L346 6M346 6L364 6L364 26M374 21L364 21L364 26M386 26L374 21M359 38L364 38L364 26M330 31L329 31M330 31L346 6M378 50L382 50L382 49M300 72L296 71M274 97L278 78M296 71L278 71L278 78M311 39L319 41M311 39L284 46M296 71L284 46M190 47L207 53M190 47L192 27M207 53L220 40M192 27L205 18M220 40L221 40L221 25M205 18L221 25M179 16L192 27M165 44L182 49M182 49L190 47M197 -5L205 -5L205 18M236 -2L233 -2L233 13M233 13L221 13L221 25M247 93L248 77M278 78L258 67M248 77L258 77L258 67M230 102L218 99M218 99L224 70M224 70L234 69M248 77L234 69M209 60L224 70M209 60L207 53M220 40L236 40L236 46M234 69L236 46M349 70L353 70L353 95M325 103L337 104M337 104L353 95M336 134L347 134L347 129M337 104L347 104L347 129M367 67L382 81M389 53L397 69M382 81L397 69M370 102L353 102L353 95M370 102L381 94M382 81L381 94M539 419L542 401M542 401L559 388M566 422L572 422L572 406M559 388L572 388L572 406M597 402L594 402L594 402M594 402L572 402L572 406M515 395L525 388M515 395L502 395L502 393M502 393L494 393L494 370M525 388L528 388L528 378M528 378L514 365M494 370L514 365M523 417L515 417L515 395M542 401L525 388M491 418L493 404M493 404L502 404L502 393M491 368L476 370M491 368L494 370M493 404L472 404L472 391M472 391L476 370M559 388L560 375M528 378L545 370M545 370L560 370L560 375M449 421L469 421M449 421L442 401M469 421L466 421L466 397M466 397L450 397L450 394M442 401L450 394M474 424L469 421M447 423L449 423L449 421M427 426L414 426L414 411M414 411L415 400M420 396L415 400M420 396L442 401M472 391L466 397M297 291L296 291L296 293M297 291L285 291L285 266M296 293L271 295M271 295L262 287M262 287L263 287L263 272M285 266L268 266L268 267M263 272L268 272L268 267M253 290L262 290L262 287M262 321L271 321L271 313M271 313L271 313L271 295M242 259L263 259L263 272M269 237L268 267M286 234L301 251M301 251L285 266M299 309L285 323M299 309L320 309L320 325M320 325L315 338M315 338L305 338L305 345M305 345L289 340M289 340L285 323M271 313L285 323M296 293L299 309M275 346L289 340M306 372L305 372L305 345M649 255L633 255L633 263M655 289L637 289L637 285M637 285L633 263M573 101L567 101L567 104M567 104L564 124M587 132L574 132L574 132M564 124L574 124L574 132M555 97L535 104M555 97L567 97L567 104M534 122L535 122L535 104M534 122L547 132M564 124L547 124L547 132M623 146L608 151M631 179L611 178M611 178L608 178L608 151M595 137L601 149M574 132L571 132L571 155M571 155L585 160M585 160L601 160L601 149M608 151L601 151L601 149M611 178L599 189M585 160L587 183M599 189L587 183M353 396L348 426M353 396L348 396L348 391M348 391L322 391L322 399M322 399L327 399L327 422M327 422L345 428M345 428L348 428L348 426M312 429L327 429L327 422M314 393L322 393L322 399M311 284L329 284L329 291M311 284L297 291M320 325L333 325L333 315M333 315L329 291M333 315L347 319M359 284L340 280M359 284L362 284L362 315M329 291L340 291L340 280M362 315L347 319M328 347L349 347L349 345M328 347L336 369M345 371L336 371L336 369M345 371L358 371L358 359M349 345L358 345L358 357M358 359L358 359L358 357M315 338L328 347M347 319L349 319L349 345M311 377L336 377L336 369M348 391L345 391L345 371M371 370L369 370L369 394M371 370L358 359M369 394L353 396M504 6L490 18M504 6L509 6L509 7M509 7L517 7L517 28M490 18L495 18L495 42M517 28L515 36M515 36L510 42M495 42L510 42M475 18L490 18M489 -12L504 -12L504 6M466 41L484 41L484 48M484 48L495 48L495 42M484 48L487 48L487 75M487 75L490 75L490 78M517 70L510 70L510 42M203 101L201 101L201 76M203 101L202 102M202 102L199 102L199 102M199 102L170 102L170 87M201 76L180 76L180 72M180 72L169 86M170 87L169 87L169 86M218 99L203 99L203 101M209 60L201 60L201 76M205 129L202 129L202 102M173 121L195 136M173 121L199 102M173 121L165 122M165 122L157 122L157 106M157 106L170 87M182 49L180 72M161 79L169 86M157 106L133 106L133 105M164 152L163 152L163 130M164 152L137 152M163 130L133 128M137 152L133 128M166 154L164 152M165 122L163 130M131 156L137 156L137 152M127 119L133 128M342 207L337 203M342 207L338 207L338 229M311 214L324 214L324 233M324 233L338 229M359 284L373 276M340 280L339 262M373 276L375 262M375 262L356 262L356 248M339 262L356 248M334 718L334 718L334 745M334 718L312 721M334 745L308 747M308 727L312 721M308 727L308 746M308 746L308 747M340 748L334 745M340 710L334 710L334 718M308 695L312 721M311 775L308 775L308 747M285 715L308 715L308 727M289 747L308 747L308 746M260 58L246 58L246 45M260 58L280 58L280 44M246 45L251 45L251 27M251 27L268 23M280 44L278 30M268 23L278 30M258 67L260 67L260 58M236 46L246 46L246 45M284 46L280 44M233 13L251 13L251 27M264 -6L268 -6L268 23M297 20L319 20L319 18M297 20L293 18M293 18L296 18L296 -4M319 18L315 18L315 -2M311 39L297 20M330 31L319 18M278 30L293 30L293 18M425 46L419 66M397 69L410 69L410 72M419 66L410 72M527 342L535 342L535 344M527 342L539 310M535 344L557 336M557 336L555 336L555 318M555 318L540 310M540 310L539 310M525 342L527 342L527 342M525 342L514 365M545 370L535 344M549 292L540 292L540 310M549 292L567 292M567 292L567 308M567 308L555 318M536 275L549 275L549 292M536 275L520 275L520 298M520 298L522 303M522 303L539 310M534 122L515 128M505 105L512 105L512 127M523 95L535 104M515 128L512 127M571 206L576 206L576 185M571 206L583 206L583 215M599 189L603 205M576 185L587 183M583 215L603 205M622 205L609 205L609 209M609 209L603 209L603 205M553 231L545 263M553 231L575 231L575 236M575 236L567 264M545 263L563 266M563 266L567 264M536 275L537 267M537 267L545 263M567 292L567 291M567 291L563 291L563 266M639 316L627 316L627 310M637 285L628 285L628 292M627 310L628 292M622 345L626 347M622 345L609 316M627 310L609 316M638 230L621 233M633 263L622 260M622 260L621 233M577 235L593 243M577 235L583 235L583 215M609 209L614 209L614 228M593 243L614 228M621 233L614 233L614 228M581 267L597 257M581 267L588 267L588 288M607 281L597 281L597 291M607 281L610 281L610 265M597 257L610 265M588 288L597 288L597 291M577 235L575 236M567 264L581 267M593 243L597 243L597 257M567 291L588 291L588 288M628 292L607 292L607 281M609 316L599 314M599 314L597 291M622 260L610 265M567 308L592 320M592 320L599 320L599 314M343 443L357 456M343 443L329 443L329 459M357 456L348 456L348 479M329 459L329 476M329 476L344 476L344 482M344 482L348 482L348 479M317 450L329 450L329 459M345 428L343 428L343 443M380 472L348 479M380 472L377 472L377 455M377 455L357 456M320 481L329 476M354 505L344 505L344 482M380 472L380 472M380 420L371 420L371 430M380 420L401 423M371 430L379 430L379 449M379 449L403 449L403 445M403 445L401 423M369 394L380 399M380 399L380 420M348 426L371 426L371 430M414 411L401 423M415 400L390 393M390 393L380 393L380 399M377 455L379 455L379 449M413 451L403 445M362 315L370 315L370 317M373 276L381 276L381 285M381 285L378 285L378 315M378 315L370 317M358 357L372 346M370 317L372 346M524 74L524 74M515 36L540 46M540 46L524 74M555 97L550 97L550 75M524 74L550 74L550 75M583 76L554 71M550 75L554 71M585 57L575 47M554 71L556 52M575 47L556 47L556 52M540 46L547 46L547 44M556 52L547 52L547 44M509 7L518 7L518 0M518 0L519 -34M375 262L382 259M382 259L387 241M355 240L356 248M355 240L365 240L365 230M365 230L387 230L387 241M321 239L338 239L338 261M321 239L302 239L302 251M338 261L309 263M302 251L309 263M324 233L321 239M338 229L355 229L355 240M339 262L338 262L338 261M301 251L302 251M311 284L309 284L309 263M491 100L485 105M485 105L484 126M512 127L498 133M484 126L498 126L498 133M470 136L484 136L484 126M470 136L468 148M495 149L498 149L498 133M495 149L476 149L476 155M468 148L476 155M336 185L349 174M327 152L345 162M345 162L349 174M454 47L455 65M419 66L437 66L437 79M437 79L455 79L455 65M487 75L466 75L466 77M455 65L466 65L466 77M587 333L571 344M587 333L603 333L603 347M571 344L572 344L572 366M603 347L597 367M597 367L576 368M576 368L572 366M592 320L587 333M557 336L571 344M622 345L603 345L603 347M560 375L572 366M608 375L597 375L597 367M594 402L576 368M408 351L395 351L395 344M408 351L404 351L404 367M404 367L390 367L390 374M385 349L395 349L395 344M385 349L386 371M386 371L390 371L390 374M409 311L423 311L423 327M409 311L394 311L394 318M422 346L423 327M422 346L408 351M394 318L395 344M420 396L421 396L421 384M421 384L404 384L404 367M390 393L390 374M378 315L394 315L394 318M372 346L385 346L385 349M371 370L386 371M476 370L469 367M450 394L451 373M469 367L451 373M421 384L435 384L435 367M451 373L435 367M422 346L432 354M435 367L432 354M520 298L498 285M522 303L506 326M498 285L490 288M490 288L494 317M494 317L506 317L506 326M491 368L494 344M525 342L507 331M494 344L507 331M507 331L506 331L506 326M515 128L520 128L520 146M495 149L507 156M520 146L507 156M490 180L507 177M490 180L479 174M479 174L476 155M507 156L507 156L507 177M381 285L399 287M409 311L412 302M412 302L399 302L399 287M382 259L404 264M399 287L404 287L404 264M414 236L396 233M414 236L416 236L416 239M416 239L414 239L414 259M396 233L387 233L387 241M404 264L414 264L414 259M610 44L601 28M575 47L579 27M579 27L585 24M601 28L585 24M628 21L610 21L610 18M601 28L610 28L610 18M579 27L562 27L562 18M547 44L550 22M562 18L550 22M517 28L543 18M518 0L536 -0M536 -0L543 18M543 18L550 22M359 179L364 178M359 179L357 205M364 178L387 195M357 205L370 213M370 213L383 208M387 195L384 195L384 208M383 208L384 208L384 208M342 207L357 205M349 174L359 179M381 157L364 157L364 178M381 157L398 163M398 163L399 182M399 182L387 182L387 195M365 230L370 230L370 213M396 233L383 208M414 236L419 212M419 212L384 212L384 208M470 136L454 115M448 152L468 152L468 148M448 152L437 143M437 143L434 126M434 126L454 126L454 115M437 79L438 89M466 77L457 100M438 89L457 100M485 105L459 105L459 104M454 115L459 115L459 104M459 104L457 104L457 100M352 155L380 157M352 155L357 155L357 131M380 157L372 128M357 131L370 131L370 127M370 127L372 128M345 162L352 162L352 155M381 157L380 157M347 129L357 131M370 102L370 102L370 127M448 152L443 174M479 174L463 174L463 183M443 174L463 174L463 183M437 143L412 158M412 158L437 178M443 174L437 178M464 317L451 317L451 318M464 317L470 317L470 321M470 321L472 321L472 336M447 322L449 345M447 322L451 322L451 318M472 336L464 336L464 350M464 350L449 350L449 345M480 286L490 286L490 288M480 286L472 290M472 290L464 317M494 317L470 317L470 321M494 344L472 336M423 327L447 327L447 322M432 354L449 345M469 367L464 350M517 208L519 208L519 205M517 208L535 229M519 205L552 205L552 205M552 229L535 229M552 229L553 208M553 208L552 205M490 180L487 180L487 205M507 177L519 183M519 183L519 205M504 216L487 205M504 216L517 216L517 208M571 206L553 206L553 208M553 231L552 231L552 229M519 183L552 184M519 183L536 183L536 154M556 161L544 152M556 161L556 179M556 179L552 184M544 152L536 152L536 154M519 183L519 183M552 205L552 184M520 146L536 154M547 132L544 152M571 155L556 161M576 185L556 179M504 216L502 227M535 229L526 229L526 241M502 227L526 241M537 267L524 267L524 260M498 285L509 261M509 261L524 260M524 260L526 260L526 241M439 297L456 297L456 286M439 297L426 297L426 292M426 292L428 269M456 286L447 263M447 263L428 263L428 269M472 290L456 286M451 318L439 297M412 302L426 292M414 259L428 269M448 261L443 261L443 237M448 261L447 261L447 263M416 239L443 239L443 237M562 18L565 18L565 -3M591 -3L608 1M608 1L622 -7M585 24L591 -3M610 18L608 1M423 120L422 120L422 102M423 120L405 120L405 127M401 125L405 127M401 125L394 99M422 102L410 102L410 94M394 99L410 94M434 126L423 126L423 120M438 89L422 102M405 158L412 158M405 158L405 158L405 127M398 163L405 158M372 128L401 128L401 125M381 94L394 99M410 72L410 94M481 207L472 234M481 207L463 202M463 202L449 214M449 214L452 226M452 226L472 234M487 205L481 205L481 207M463 183L463 202M405 185L421 185L421 210M405 185L435 185L435 182M435 182L435 205M421 210L435 210L435 205M399 182L405 185M419 212L421 210M437 178L435 182M449 214L435 214L435 205M443 237L452 226M500 253L496 253L496 235M500 253L475 262M496 235L472 234M472 234L470 257M470 257L475 262M502 227L496 227L496 235M509 261L500 261L500 253M480 286L475 262M472 234L472 234M448 261L470 261L470 257" stroke="#606262"/>
<path d="M6.0 704.5 L13.4 700.8 L20.8 698.4 L28.2 700.8 L30.6 704.5 L38.0 707.0 L45.4 704.5 L46.6 712.0 L49.0 716.8 L51.6 724.2 L59.0 729.0 L67.6 730.4 L71.3 726.7 L72.5 734.0 L76.2 740.2 L72.5 746.4 L79.9 752.5 L87.3 753.8 L91.0 744.0 L95.9 748.9 L104.5 753.8 L107.0 756.2 L114.4 753.8 L116.8 748.9 L124.2 746.4 L129.0 741.5 L134.0 746.4 L144.0 748.9 L147.6 753.8 L150.3 740.0 L148.9 722.4 L154.8 721.0 L166.6 726.8 L178.4 732.7 L184.3 738.6 L188.7 744.5 L199.0 750.4 L206.5 756.4 L215.0 762.0 L235.0 775.0 L250.0 790.0 L258.0 796.0 L262.0 790.0 L255.0 775.0 L245.0 762.0 L240.4 756.4 L231.6 752.0 L227.0 744.5 L216.8 738.6 L205.0 735.7 L202.0 729.8 L203.5 719.4 L211.0 712.0 L219.8 706.0 L222.7 698.7 L227.0 688.4 L228.6 679.5 L222.7 672.0 L215.0 676.0 L204.0 680.0 L197.6 684.0 L196.0 693.0 L191.7 694.3 L187.3 691.4 L184.3 688.4 L178.4 687.0 L177.0 684.0 L177.0 681.0 L184.3 679.5 L190.2 674.4 L196.0 669.2 L205.0 665.5 L211.0 660.3 L213.9 656.0 L214.6 651.5 L218.3 654.0 L220.8 650.3 L230.6 651.6 L240.5 646.6 L250.3 646.6 L255.3 649.0 L265.0 651.6 L277.4 654.0 L284.8 650.3 L292.2 647.9 L297.0 652.8 L304.5 655.3 L307.0 643.0 L309.4 628.2 L313.0 622.0 L318.0 624.5 L321.8 638.0 L324.2 647.9 L331.6 655.3 L335.3 660.2 L344.0 659.5 L360.0 656.0 L378.0 652.0 L395.0 648.5 L406.0 647.9 L418.3 647.9 L435.6 650.3 L455.3 655.3 L470.0 662.7 L482.4 671.3 L492.2 680.0 L502.0 687.3 L507.0 694.7 L508.2 704.5 L512.0 712.0 L521.8 712.0 L531.6 715.6 L534.0 719.3 L544.0 715.6 L553.8 710.7 L563.6 703.3 L573.5 694.7 L583.3 688.5 L587.0 682.4 L593.2 677.4 L600.6 675.0 L606.0 673.7 L613.4 675.0 L620.8 682.4 L630.6 687.3 L640.5 695.9 L645.4 707.0 L655.3 714.4 L657.7 724.2 L667.6 731.6 L675.0 744.0 L682.4 752.5 L682.4 761.2 L692.2 757.5 L700.8 761.2 L703.3 771.0 L712.0 780.9 L713.0 790.7 L716.0 807.0 L5.0 807.0Z" fill="#004466" stroke="#000"/>
<path d="M807.0 568.0 L803.0 572.0 L801.0 585.0 L803.0 598.0 L800.5 612.0 L802.0 628.0 L804.0 640.0 L807.0 646.0Z" fill="#004466" stroke="#000"/>
<path d="M344.0 658.0 L345.2 652.8 L351.3 654.0 L356.2 650.3 L358.7 644.2 L362.4 645.4 L360.0 653.0 L368.6 651.6 L374.0 648.0 L376.0 651.0 L366.0 655.0 L352.0 658.0Z" fill="#004466" stroke="#000"/>
<path d="M376.0 645.4 L378.4 635.6 L382.0 638.0 L387.0 630.6 L389.5 636.8 L395.7 643.0 L398.0 644.2 L388.3 646.6 L378.4 650.3Z" fill="#004466" stroke="#000"/>
<path d="M418.3 643.0 L428.2 638.0 L438.0 643.0 L447.9 640.5 L454.0 643.0 L455.3 647.9 L445.4 649.0 L430.6 646.6 L420.8 646.6Z" fill="#004466" stroke="#000"/>
<path d="M473.7 657.7 L480.0 655.3 L489.7 656.5 L497.0 652.8 L494.7 659.0 L487.3 663.9 L484.8 670.0 L491.0 673.7 L497.0 676.2 L504.5 677.4 L508.2 680.0 L502.0 682.4 L494.7 680.0 L487.3 673.7 L480.0 667.6 L477.4 662.0Z" fill="#004466" stroke="#000"/>
<path d="M507.0 694.7 L512.0 696.0 L514.4 704.5 L512.0 710.7 L509.5 704.5Z" fill="#004466" stroke="#000"/>
<path d="M524.0 711.0 L531.0 708.0 L538.0 704.0 L546.0 702.0 L550.0 698.0 L545.0 705.0 L540.0 708.0 L534.0 712.0 L528.0 714.0Z" fill="#004466" stroke="#000"/>
<path d="M578.0 685.0 L586.0 686.0 L588.0 690.0 L581.0 689.0Z" fill="#004466" stroke="#000"/>
<path d="M13.0 717.0 L25.7 721.8 L35.6 720.5 L39.3 724.2 L33.0 729.0 L25.7 728.0 L18.3 721.8Z" fill="#5e504b" stroke="#000"/>
<path d="M522.0 716.0 L534.0 721.5 L548.0 716.0 L562.0 707.0 L570.0 700.0 L563.0 708.0 L549.0 718.0 L534.0 723.5Z" fill="#5e504b" stroke="#000"/>
<path d="M300.8 59.0 L305.8 55.3 L311.9 56.5 L314.4 62.7 L318.0 70.0 L323.0 71.3 L321.8 76.2 L319.3 77.4 L320.5 84.8 L324.2 91.0 L323.0 95.9 L319.3 89.7 L315.6 83.6 L314.4 76.2 L311.9 68.8 L309.4 62.7 L304.5 61.4 L302.0 62.7Z" fill="#2b4a6b" stroke="#1e3a5c"/>
<path d="M368.6 260.7 L373.5 258.2 L378.4 261.4 L385.8 265.0 L393.2 268.8 L396.9 276.2 L393.2 275.0 L387.0 271.3 L380.9 267.6 L376.0 263.9 L369.8 263.2Z" fill="#2b4a6b" stroke="#1e3a5c"/>
<path d="M439.3 376.0 L443.0 368.6 L449.0 363.6 L451.6 366.0 L446.6 372.3 L444.2 377.2 L440.5 378.0Z" fill="#2b4a6b" stroke="#1e3a5c"/>
<path d="M606.0 307.0 L611.0 303.3 L613.4 294.7 L614.6 286.0 L617.0 291.0 L620.8 287.3 L622.0 292.2 L627.0 293.4 L620.8 298.4 L618.3 303.3 L613.4 309.4 L608.5 313.0 L604.0 313.5 L603.0 309.0Z" fill="#2b4a6b" stroke="#1e3a5c"/>
<path d="M526.0 502.0 L529.0 504.5 L534.0 502.0 L534.0 509.4 L531.6 516.8 L530.4 524.2 L536.5 525.5 L532.8 529.0 L534.0 536.5 L530.4 536.5 L525.5 531.6 L528.0 528.0 L525.5 521.8 L526.7 514.4 L528.0 508.2Z" fill="#2b4a6b" stroke="#1e3a5c"/>
<path d="M424.5 413.4 L427.0 417.0 L425.7 423.2 L429.4 429.4 L431.9 428.2 L430.6 434.3 L428.2 430.6 L424.5 424.5 L423.7 418.3Z" fill="#2b4a6b" stroke="#1e3a5c"/>
<path d="M541.5 607.2 L546.4 612.0 L553.8 606.0 L556.2 611.0 L563.6 611.0 L562.4 613.4 L553.8 614.6 L546.4 619.5 L541.5 617.0Z" fill="#2b4a6b" stroke="#1e3a5c"/>
<path d="M59.0 687.3 L62.7 697.0 L70.0 703.3 L82.4 707.0 L79.9 709.4 L67.6 707.0 L59.0 699.6 L56.5 691.0Z" fill="#2b4a6b" stroke="#1e3a5c"/>
<path d="M784.5 734.0 L789.5 739.0 L795.7 746.4 L794.4 752.5 L789.5 753.8 L785.8 746.4 L783.8 739.0Z" fill="#2b4a6b" stroke="#1e3a5c"/>
<path d="M144.0 695.0 L150.0 693.0 L153.0 698.0 L151.0 703.0 L147.0 706.0 L143.0 708.0 L141.0 704.0 L145.0 700.0Z" fill="#2b4a6b" stroke="#1e3a5c"/>
<path d="M780.0 799.0 L786.0 796.0 L790.0 800.0 L786.0 804.0 L781.0 803.0Z" fill="#2b4a6b" stroke="#1e3a5c"/>
<ellipse cx="129.0" cy="660.0" rx="7.4" ry="8.6" fill="#2b4a6b" stroke="#1e3a5c"/>
<ellipse cx="45.4" cy="684.8" rx="4.0" ry="5.0" fill="#2b4a6b" stroke="#1e3a5c"/>
<path d="M785.5 654.8 L786.3 663.4 L788.5 672.0 L789.5 680.7 L793.0 690.0 L794.4 704.5 L789.5 712.0 L788.3 721.8 L784.5 726.7 L785.5 735.0" stroke="#000" stroke-width="4"/>
<path d="M785.5 654.8 L786.3 663.4 L788.5 672.0 L789.5 680.7 L793.0 690.0 L794.4 704.5 L789.5 712.0 L788.3 721.8 L784.5 726.7 L785.5 735.0" stroke="#004466" stroke-width="2"/>
<path d="M222.7 672.0 L228.6 679.5 L227.0 688.4 L222.7 698.7 L219.8 706.0 L211.0 712.0 L203.5 719.4 L196.0 724.0 L183.0 718.0 L184.0 711.0 L192.0 700.0 L199.0 692.0 L205.0 677.0Z" fill="#004466" stroke="none"/>
<path d="M189 716L188 716L187 717M219 677L221 676L222 678M215 686L215 683L214 681L215 678M207 712L207 711L208 712L211 715L211 717L213 715M212 710L209 709L211 710L213 709L215 710M197 703L199 703L199 700L198 702L197 700L198 701M214 691L215 689L213 691L212 693L212 691L214 692M209 706L209 709L211 709L213 707M209 696L210 697L212 696L214 699L216 699M189 712L188 710L191 710L189 710M205 691L202 691L204 690L204 692L205 692M223 696L221 693L222 692L219 690L219 688M195 709L197 709L194 708L193 710L192 708L193 711M227 684L225 685L223 686L224 687L223 689L225 689M193 706L194 708L195 707L197 705L195 702L192 700M225 687L224 686L221 688L219 690M191 717L190 716L188 717M188 707L188 704L188 703L187 701L189 703M209 679L207 680L209 683L208 685L209 685L212 683M216 676L214 677L213 676L213 674M194 721L192 721L189 719L187 721L188 723L187 723M219 692L219 694L218 693L218 691M224 678L226 675L227 672M188 718L186 720L187 718M204 707L205 705L207 704L210 707M196 703L196 702L193 701L194 701L192 703L194 705M223 696L221 697L220 695L217 694L220 693M213 705L212 704L211 703L213 706M208 702L206 699L205 697M196 713L196 715L194 717L193 717L194 715L192 713M222 688L220 686L220 687L222 689L223 690M228 683L228 681L229 682L227 679L230 681M208 700L205 702L203 702L205 705L208 702L209 702M210 679L209 679L210 677L207 677L207 678M203 708L201 708L201 706L201 706M196 706L198 707L199 706M206 713L205 714L207 714L209 715M209 681L209 684L210 686L210 685L211 684M222 700L222 698L220 695M217 676L219 677L222 678L220 680M194 716L193 719L193 719L193 718L193 718L195 719M207 702L208 703L210 701M196 700L195 702L197 701L199 704L197 703M193 718L191 715L193 713L195 713M227 679L228 678L228 677L228 674L228 674M205 706L205 706L208 707L209 708L210 706L213 707M215 695L214 692L214 692L213 694M210 710L210 712L210 713M212 693L213 696L214 698L216 700M211 690L212 690L214 688L213 687L211 687M210 676L211 673L211 675M214 693L215 691L213 693L212 691L214 691M200 699L198 700L199 701M195 704L195 703L195 702L195 703M195 704L197 701L199 702L198 701M192 705L194 705L194 708L192 710M204 680L206 680L205 680L203 678M214 676L213 676L211 674L208 674M224 683L223 683L225 686M203 706L201 708L198 707L198 706L196 705M220 696L219 697L218 698L220 701L217 703L220 702M200 702L200 704L201 702L204 699M190 707L190 705L187 706M207 699L205 698L202 695L200 696M217 708L218 707L219 710L220 708M210 690L212 690L213 692M206 677L203 677L203 675L202 676L204 674M207 677L204 674L204 675L203 673L204 675M222 688L224 688L222 690L222 690L225 690L223 691M207 701L209 703L208 701M200 699L199 697L197 696M219 700L218 699L217 700L217 701L215 703L214 702M217 691L216 691L219 691L217 689L218 689M224 682L227 682L229 685L230 686L228 684L229 685M193 716L190 715L192 716L191 718L191 721L194 720M214 700L216 702L217 705L216 703M206 697L207 697L208 697L207 700L204 703L205 703M208 715L210 715L211 715L211 716L213 718M202 705L201 703L201 700L203 703L201 700M202 706L202 706L204 708M200 696L201 698L203 698L205 697L203 695M225 683L227 683L227 680L225 678L227 676L224 677M216 707L219 708L218 710M215 674L216 672L216 673L214 673M224 678L222 677L224 676L224 675L227 678L226 678M193 712L195 709L196 710L196 713L197 710M212 688L210 686L211 686M209 703L209 704L207 703M196 708L196 708L196 707L194 708L196 709M206 699L207 701L209 700L209 699M208 709L209 707L207 707L209 707M197 704L198 703L199 705M195 709L192 708L190 707L192 708L189 705L190 703M194 707L191 710L194 707L196 709L198 707M225 686L226 687L227 687M207 692L208 693L206 693L204 691M203 700L203 703L202 701L203 702L200 705M200 701L200 701L198 698M209 707L209 709L211 708L210 706M214 705L215 702L216 700M203 707L205 707L206 704L206 701L207 698M220 685L218 687L220 685L217 686M202 710L203 713L205 710L204 709L203 711M203 708L200 709L203 707L204 707M199 709L198 707L199 710M194 723L195 724L195 724L195 726L196 724M203 700L206 702L204 701L201 699L199 697L200 698M219 687L217 687L215 686L215 688M193 708L194 707L193 705M191 706L193 709L196 707M210 699L208 696L208 694L208 695L211 692L211 692M220 674L222 671L224 671L225 669M220 701L221 703L221 701L223 700L222 698L223 695M199 720L198 719L197 719L195 717L193 715M220 700L220 701L218 699L218 700M190 707L191 706L193 707M199 716L198 713L198 712L198 711M220 704L220 706L219 703M221 688L224 689L221 691L222 690M189 719L190 718L193 716L194 715M192 712L193 712L192 709L190 710L190 709L189 707M213 693L211 695L209 695L208 692L207 694L207 697M224 677L226 679L225 677M206 716L206 714L205 717L208 718L205 721L205 723M224 687L225 684L227 685M206 702L206 704L206 707L206 709L206 709M210 689L210 689L213 686L214 688M199 692L200 690L200 687M224 690L226 687L225 684L227 682L227 681M209 703L208 703L210 706L212 706L210 704L210 706M195 722L196 723L193 721L196 720L193 718M216 686L214 687L211 687L213 689M192 700L191 699L191 696L193 698L191 701M208 709L207 711L205 712L208 712L209 711L211 711M211 690L208 690L206 693M191 721L189 720L189 719L188 720M214 687L215 687L215 689L216 690L216 692L218 692M198 706L200 707L202 709L203 710M206 697L206 695L205 697L204 698L203 699L202 696M204 690L202 690L201 693L199 695L196 693L199 696M195 700L194 697L193 698M212 679L215 679L214 682L215 680L216 680M209 691L208 694L211 695L213 698L213 696M193 709L192 707L194 708L197 705L198 704L198 705M206 689L207 687L207 686M206 679L209 676L206 674M208 689L208 690L208 688M210 699L208 698L205 701L206 699M209 698L210 697L208 699M187 713L185 713L183 714L186 712M216 677L219 678L219 680L220 681M218 689L218 691L219 692L221 691L220 690M200 696L199 698L199 698L198 697L195 697M216 681L214 678L215 677L215 675M222 688L220 687L220 685L218 684L219 684L216 681M217 691L219 693L219 694L218 691L221 689M195 704L193 706L192 706L190 708M209 682L207 682L206 680L203 681M203 699L203 698L203 695L201 697M211 707L208 708L207 707L207 709M208 679L209 680L211 681M219 677L218 674L216 675L218 672L216 671M197 715L199 718L199 715L197 714L195 713M211 686L211 687L212 686L212 685L212 686L214 685M203 715L201 716L198 714L198 713M205 689L205 689L203 689L203 691M191 703L193 702L192 700M212 700L212 703L210 700M220 702L217 700L219 697L220 697L223 700L221 699M191 719L190 721L189 721L188 721L188 720M221 683L223 685L222 684L223 684M191 718L193 718L195 715L196 713L196 712L194 712M222 674L225 674L225 673L224 675M221 686L222 688L219 691M193 716L192 718L192 719L190 719L189 716L189 718M222 698L220 701L221 699L222 698L222 700M205 695L206 694L208 693L206 691L204 689M199 702L197 703L199 706L197 706L200 709L197 708M199 703L198 706L201 708L199 711L199 713L196 714M219 704L217 706L216 704L218 702M188 713L190 711L189 711L190 712M227 680L225 681L223 679L222 680M215 688L212 690L211 691L211 689M213 679L213 677L212 675L215 674L212 674L212 676M216 683L217 682L216 682M223 689L224 692L224 693L225 691L224 690L226 690M200 701L198 698L196 697L196 699M191 715L188 717L187 715M194 712L196 714L197 711L196 712L197 713M199 716L200 713L202 715L202 713M205 711L203 711L203 709L205 710L204 711L207 709M221 688L218 689L221 688M224 678L221 677L224 675M203 688L204 685L206 685M193 719L195 722L194 719L194 721L194 720M210 689L211 690L211 691L212 691L212 690L210 687M221 685L222 686L221 683L224 686L226 686M208 679L208 680L209 678M195 722L196 720L197 720M212 708L210 708L209 710L206 708L207 710L204 710M217 682L216 681L216 683L218 683M211 687L208 687L206 690L205 693M221 694L220 696L217 696M221 694L220 693L222 696L224 695L227 694L229 693M207 678L207 676L208 675M228 683L229 682L226 684L226 686M189 717L191 718L191 718M209 681L210 684L211 685L211 687L213 685M201 717L199 716L200 717L198 715L198 714L200 712M219 680L221 682L218 683L221 685L221 686M196 714L197 713L197 714L199 715L198 717L200 717M210 685L213 682L213 682M197 700L199 702L197 703L199 701L200 704M212 708L215 707L215 709L215 710L214 710M193 723L191 722L189 724L192 726M221 676L224 674L221 672L223 674L222 672L222 672M219 695L217 697L214 697M221 696L221 696L219 695L217 695M224 686L223 683L225 684L227 683L226 682M213 678L211 676L214 677M214 707L214 708L214 710M225 684L222 681L224 679M208 682L208 681L211 681M201 699L200 698L200 697L202 695L200 692L198 691M201 718L203 720L200 721L198 721L198 719L195 717M209 682L207 680L205 681L205 680M226 683L228 686L231 687L233 684L232 684L232 683M220 702L219 702L218 704L217 706L219 704L221 705M223 698L225 698L227 701L227 701L229 702L228 703M214 709L214 709L217 707L216 704" stroke="#000"/>
<path d="M204 755L201 754L199 756M188 757L190 759L190 758L193 758L195 761L194 763M160 730L159 728L159 731L160 729M191 754L193 753L196 756L194 757L195 757M180 739L180 741L179 743L181 743L182 746L183 746M162 733L165 734L166 734L165 736M178 744L177 742L177 744L178 742L180 743L182 741M163 753L164 750L163 752M153 735L154 732L157 729L158 726M164 750L166 751L163 751L165 750M181 743L183 745L185 746M156 738L156 739L156 738L158 737M165 756L166 759L167 757M157 728L158 728L161 731L164 729L164 728L164 728M195 747L196 746L197 743L197 741L197 739M151 745L150 746L149 749L151 750L151 750L151 747M173 740L176 741L176 738L179 736M171 746L169 748L169 746L167 748L169 750M153 744L152 745L149 744L148 746L146 748L144 748M172 738L171 736L169 733L171 734L174 735M151 745L153 745L152 745M179 739L182 741L181 739L181 738L180 739L183 739M170 757L172 759L174 762L175 764M152 756L150 757L152 757L152 754L152 757L154 755M179 747L177 745L180 743L182 743L183 744M176 747L178 745L178 745L178 746L181 748L180 750M169 748L170 750L168 751M173 745L171 745L174 745M160 725L163 727L163 729L166 727L167 728L166 730M164 742L165 745L167 744L169 744L170 741L171 744M169 749L168 749L170 751L167 751L170 752L168 750M152 752L150 753L150 751L151 752L150 750L149 749M186 740L186 738L187 740M158 740L157 738L157 736M166 756L167 757L169 756M170 734L168 733L167 736L169 735L170 738M163 729L161 726L159 725L160 724L161 726M166 747L167 749L169 751L171 754L170 755M177 753L176 753L178 750L176 748M168 751L168 751L171 750L169 750L172 752L171 749M161 747L160 746L161 743M158 752L158 750L157 751L154 752L156 755L154 752M179 745L182 747L181 747L181 744L179 747L177 750M188 754L187 754L189 752M151 737L150 739L150 741M153 741L155 741L156 744M158 739L158 738L158 739L159 740M169 745L171 746L171 748L169 746L171 747L169 746M167 737L164 736L163 734L161 732L161 732L160 732M158 741L155 741L153 740M182 745L184 746L184 743M193 751L194 748L192 746L193 746M160 755L161 758L159 757L161 759L161 757L164 758M152 732L153 734L155 731M192 753L194 754L195 754L195 753L195 752L193 752M161 738L160 736L160 739L159 739L160 742M162 751L159 753L156 756L154 756L155 757M176 747L177 745L175 745L174 743L175 745M195 754L195 756L197 755L198 757M169 744L169 742L167 739L168 737L169 737L169 739M172 739L171 737L168 737L170 738L171 735L170 734M163 732L163 732L165 732L166 734L164 731M158 733L159 734L161 732M158 733L158 736L157 735L159 735L157 737M170 755L172 758L172 760L169 759L171 756M188 757L190 754L190 755M174 737L172 734L173 737L175 738M167 754L169 754L172 752M154 735L152 735L150 736M154 752L152 752L152 751L154 749M174 738L171 741L169 743L172 743L174 746M175 739L177 737L176 735L174 735M185 756L185 756L184 754L185 757L187 758L184 756M197 756L197 757L196 758L195 761L195 761L195 762M176 755L175 755L178 757L179 760L176 760M204 756L204 759L205 760L207 760L205 759L208 757M175 747L175 749L175 749L176 750M152 738L149 740L148 739M173 748L174 748L174 749L173 751L173 750M173 745L175 746L175 744M167 751L167 750L167 750L165 752L168 750L167 752M173 739L174 740L175 740L173 740L170 742M201 757L198 754L200 752L198 752M182 739L179 738L177 741M193 754L192 756L192 759M166 754L164 757L162 755L165 758M153 756L154 758L155 760L153 763L150 761M156 749L155 752L156 750L157 747M151 744L153 746L151 747M154 744L151 741L148 744M190 755L187 758L188 759L186 758M155 729L153 729L151 732L150 732L150 735L151 732M193 748L194 749L191 749L192 750L190 753M163 746L163 745L160 742L157 740L159 739L158 739M152 728L155 730L153 728L151 727M174 746L172 743L174 742M165 731L165 734L168 733L169 733L171 732M166 736L165 736L165 737L164 734L161 737L164 736M155 751L155 750L158 749L156 748L154 745L154 743M172 750L171 750L172 748M172 749L175 750L177 752L179 753M164 732L162 733L165 733L166 730L166 730M169 738L168 740L168 742L170 739M168 737L166 738L166 737L169 735M153 753L156 754L153 753M203 754L200 751L199 752L201 754L203 751M152 731L152 728L152 727M172 754L171 752L173 754L175 755M152 732L152 729L154 727L156 728M157 729L156 730L158 728L156 730" stroke="#000"/>
<path d="M214 749L217 749L217 750L220 749L220 748M230 749L230 751L228 749L231 748L228 750L226 753M226 758L228 761L227 762L227 765L229 763L227 761M223 745L223 745L222 744L224 741L223 742M230 753L232 755L233 756L231 758L232 757M211 743L213 740L214 738L215 737L218 739L218 742M213 746L211 743L213 742L216 744L215 744M224 751L224 754L224 754M216 759L217 757L216 757L213 758L214 755M227 747L228 746L228 746L231 744L230 744M216 750L215 749L215 750L213 749M225 754L225 755L224 754L225 754L223 755M214 755L211 757L209 757L208 759M217 756L219 755L221 753L222 753M220 748L220 749L219 750L216 749L214 749M223 749L221 749L222 751L225 751M210 742L213 743L215 745M212 743L212 743L215 743M218 742L219 739L218 737L220 735L219 734L221 731M225 746L224 746L224 744L223 746L225 747M208 737L210 739L208 739L207 738L206 739L206 738M212 744L210 741L212 743M222 752L222 749L225 746L226 748L224 750L224 748M213 742L215 741L213 738M217 759L215 760L217 762L220 762L219 760" stroke="#000"/>
<path d="M799 636L801 637L800 635M789 601L789 599L787 600L787 598M804 603L802 603L800 600M804 586L807 584L805 583L803 585M799 583L802 585L801 585L799 582M799 566L796 565L795 567L793 566L791 565M806 655L808 652L810 652L810 649L807 647M806 584L809 587L808 586L808 588M788 636L790 634L793 631L792 632L795 631M805 617L807 616L808 617L810 616L810 617M788 622L785 624L784 622L785 620L788 621L790 620M798 578L795 578L793 580L792 580L795 582L798 582M796 635L795 634L797 632L799 632L797 635L800 633M796 614L794 616L793 617L790 616L790 617M804 591L806 590L804 592L804 594L803 592M792 613L791 614L793 616L792 618L794 619M806 656L807 654L809 657L809 658M801 635L802 637L802 640L801 640M804 591L802 592L803 590M802 583L805 586L803 588M796 618L796 617L797 617L795 620L792 619L791 619M788 644L791 644L790 643L790 646L789 645M789 604L789 602L788 602L786 600L784 602M800 602L800 603L798 603L800 603L800 601M792 657L791 660L789 660L791 659L789 656L792 655M806 579L803 580L803 579M802 644L802 644L801 644M804 634L802 634L802 635L803 637L801 638M792 616L793 618L790 617L791 619L789 616M798 630L800 631L797 632M795 620L797 622L797 623L798 626L798 627L797 624M802 621L805 619L805 619L805 618L803 618L804 616M791 643L792 640L793 643M807 632L805 630L805 632M807 632L805 633L804 631L805 628L803 628L800 625M798 636L795 633L796 633L795 634M805 579L803 580L803 582L803 583L802 583M791 637L793 639L793 638L791 635M793 620L791 618L791 616M804 611L802 611L802 611L804 613L804 615M802 574L804 572L804 571L803 570L804 569L803 567M803 627L806 626L803 629L802 627L799 624L797 623M796 654L793 654L796 655L795 654L793 652M789 601L792 601L792 599L794 600L795 597L797 596M802 596L803 597L803 599M788 629L788 627L791 624L792 625L793 626M805 632L803 632L801 635L800 636L799 634M801 591L799 593L798 590L798 593L798 592L796 590M805 612L802 611L799 610L797 609L796 607L794 605M806 583L805 581L807 583L805 586L803 583L804 584M795 600L796 599L796 600L799 599L799 601L797 599M793 574L794 573L792 571L791 568L790 569M791 572L788 570L787 569L785 569M793 637L795 638L797 638M795 643L797 644L795 646M794 578L793 576L793 575M802 569L799 566L798 569M806 624L806 621L804 620L802 621M792 623L791 626L793 623L792 626M796 607L793 608L791 608L791 605L789 607L790 605M791 632L790 631L789 629L789 628L791 626M793 589L794 589L792 591M796 570L796 571L794 574L796 575M796 610L798 609L795 610M798 583L795 584L796 585L796 585L797 584L799 585M806 618L806 620L805 621M800 615L799 612L801 613L803 616L802 618M791 570L792 572L794 573M804 635L804 633L801 632L803 632M806 629L804 630L807 632L807 632L805 633L805 634M794 649L793 651L794 649L797 646M795 583L795 584L796 584M795 588L795 590L794 589L794 592L792 589L790 589M799 583L798 581L799 580L797 583M789 615L788 617L789 619M791 631L793 629L794 626L793 625L794 626L794 625M802 583L801 585L800 584M790 650L788 652L788 649M807 656L808 656L810 659L808 661M801 594L803 597L805 595M793 579L794 581L792 579L791 581L788 581L787 584M792 634L790 631L790 634L790 633M806 575L803 572L805 570L807 567L808 570M804 573L802 575L799 575L802 576M804 610L801 610L803 609M798 651L797 650L798 652M803 607L800 609L798 608L797 606L799 603L798 603M790 579L789 580L786 578L786 576L785 578M805 584L806 584L805 584M796 573L798 570L797 570L795 572L794 573M789 615L788 612L787 611M805 617L808 616L808 614L809 616L806 616L808 613M802 605L804 603L804 600L803 599M795 628L796 626L796 627L796 626L798 627M800 627L802 627L801 629M792 618L790 617L790 617L788 617L786 615L785 612M806 591L806 589L804 587L801 586L799 587M801 622L803 624L804 624L806 623L804 623L805 624M800 627L801 625L802 625M799 587L800 588L801 585M801 595L804 596L802 595M792 609L789 610L790 613L789 611L788 609M806 585L804 588L805 588M797 603L795 603L796 603L796 605M796 616L797 617L796 619L798 618M794 650L793 651L791 653L792 650L790 653M792 637L789 640L789 641L790 639M795 597L793 596L792 599M795 572L793 575L794 577M797 576L794 575L797 576L798 577L797 576L794 575" stroke="#000"/>
<path d="M133 754L135 751L133 752L135 753L134 750L134 748M138 756L137 756L138 755M134 751L133 748L135 750L134 748L132 749L131 751M119 740L119 742L118 742L120 744L120 747M122 741L121 741L119 743L119 741L120 740L118 740M89 740L87 738L88 738M125 749L124 749L122 752L119 751L121 750M146 741L148 742L150 741M136 753L136 755L135 752L136 751L136 752L134 749M88 749L86 749L85 749L88 751L88 751M120 750L118 749L117 751L116 752L119 755L118 755M101 744L103 742L105 742L106 745L104 746L104 747M105 758L107 755L105 758L106 757L108 759L107 759M87 743L88 742L87 739L88 740M83 746L84 747L82 749M86 749L88 752L88 753L90 751L92 753M110 753L110 753L110 755L109 754L108 751L108 750M98 746L101 743L98 745L99 745L96 743L96 741M147 753L148 752L145 753L143 753M111 746L109 745L112 744M127 739L127 741L129 744L130 745M88 751L91 751L88 753L88 755L90 755M81 754L82 755L84 755L85 757M91 749L88 746L88 744L89 744L90 745L88 743M107 753L105 750L105 747L108 747L110 748M92 751L93 752L95 753M99 745L101 746L101 747L100 744M115 752L117 749L118 747L117 744L119 741M142 757L143 760L142 757L141 757L141 755L142 756M95 738L94 739L97 738L97 740M142 741L145 739L144 741L145 744L147 744M88 749L88 751L90 751L91 749L92 749L94 748M141 735L140 733L139 735L138 732L137 730L137 731M142 737L142 739L144 736L147 734L147 737L149 739M102 751L104 752L106 750L104 747L104 749L102 749M88 751L85 753L87 751M103 757L101 755L101 758L103 757M87 749L90 747L89 745L88 744L86 745L83 746M112 750L110 748L111 747L112 745L114 744M136 738L137 740L140 742L138 745L137 748L140 745" stroke="#000"/>
<path d="M249.3 678.0 L253.7 685.5 L253.7 694.3 L250.8 703.2 L246.4 710.6 L240.4 716.5 L234.5 723.9 L225.7 730.5" stroke="#000" stroke-dasharray="3 2 1 2"/>
<path d="M228.0 662.0 L236.0 664.0 L246.0 663.0" stroke="#000" stroke-dasharray="3 2 1 2"/>
<path d="M258.0 661.0 L270.0 663.0 L286.0 664.0" stroke="#000" stroke-dasharray="3 2 1 2"/>
<path d="M243.0 697.0 L246.0 693.0" stroke="#000" stroke-dasharray="3 2 1 2"/>
<path d="M312.0 665.0 L330.0 663.5 L345.0 661.0" stroke="#000" stroke-dasharray="3 2 1 2"/>
<path d="M182.0 6.0 L185.8 11.2 L188.8 15.6 L192.3 20.7 L196.0 25.5 L197.3 31.6 L199.5 37.2 L200.3 43.3 L200.7 49.1 L201.1 56.4 L201.0 62.7 L200.4 68.9 L201.1 75.2 L199.6 80.7 L198.7 87.4 L198.3 94.0 L196.9 100.0 L193.7 104.1 L191.2 107.3 L188.6 111.9 L187.4 117.7 L185.2 123.0 L185.0 128.2 L183.1 134.4 L180.5 139.1 L178.1 144.6 L176.4 148.9 L173.0 155.8 L170.2 162.4 L166.4 167.7 L163.8 173.6 L160.7 179.3 L157.6 185.1 L153.9 190.6 L151.0 195.7 L148.2 200.6 L144.8 205.6 L148.4 212.3 L151.3 217.8 L156.0 221.9 L160.0 224.5M240.5 6.0 L236.4 10.6 L233.6 13.7 L229.9 18.3 L228.5 24.8 L228.6 30.1 L227.2 36.5 L226.8 43.0 L225.1 48.9 L223.4 54.4 L220.5 60.6 L216.4 63.1 L211.1 66.5 L205.7 69.2 L200.6 75.0M240.5 6.0 L244.7 12.2 L249.5 17.9 L252.3 22.9 L255.3 27.6 L259.5 33.3 L262.7 37.6 L263.5 44.3 L264.3 50.1 L268.4 54.1 L272.4 57.9 L279.6 58.9 L287.0 59.2 L293.7 56.1 L300.9 54.6 L305.9 54.6 L312.2 55.9 L317.9 59.3 L324.5 62.8 L328.7 65.2 L332.3 69.4 L337.2 72.1 L341.2 75.0 L346.0 78.4 L350.5 81.9 L354.5 85.0 L359.4 88.0 L363.9 90.9 L368.4 95.7 L372.9 100.3 L378.7 104.3 L383.6 108.4 L388.4 112.8 L393.5 116.8 L400.0 120.5 L405.7 124.6 L409.0 128.0M176.0 223.0 L181.1 221.1 L186.2 217.9 L191.0 216.1 L195.6 214.2 L200.6 211.2 L206.0 209.4 L206.5 205.1 L205.8 201.2 L211.4 197.6 L215.4 194.2 L221.0 190.2 L225.5 188.4 L230.5 186.8 L235.8 184.0 L241.1 182.1 L245.9 179.9 L251.2 177.9 L256.9 174.9 L261.7 172.9 L267.8 170.6 L273.6 169.7 L279.6 167.9 L285.5 166.4 L290.8 165.7 L296.8 164.1 L302.8 163.2 L307.6 161.5 L313.3 161.3 L319.0 159.4 L325.5 158.8 L331.6 157.3 L337.3 155.8 L344.1 153.9 L350.7 151.6 L357.3 149.2 L364.0 147.3 L370.2 146.2 L377.3 144.1 L383.6 143.1 L389.7 140.5 L394.5 138.2 L400.1 136.3 L405.1 135.0 L409.0 133.0M472.5 6.0 L472.3 12.8 L471.3 18.9 L471.9 26.0 L469.1 32.1 L466.5 38.7 L464.8 46.0 L460.4 48.5 L457.4 51.5 L452.7 55.4 L446.1 57.4 L439.7 59.0 L433.2 61.9 L431.7 66.2 L430.0 72.3 L428.6 77.2 L425.9 81.7 L423.2 87.3 L421.0 91.7 L416.6 98.6 L413.3 104.0 L411.9 109.3 L410.0 114.9 L409.4 120.0 L409.7 125.2 L409.0 130.0M588.3 6.0 L587.6 13.5 L587.2 21.3 L590.5 26.0 L593.2 30.6 L595.9 35.3 L599.7 40.1 L603.0 45.8 L602.0 50.9 L600.1 55.8 L603.0 61.2 L605.4 68.0 L608.0 73.9 L609.2 80.3 L608.4 85.6 L607.0 90.8 L606.5 97.5 L601.3 101.0 L595.5 104.9 L591.3 109.8 L593.4 115.4 L595.4 122.1 L598.7 127.6 L600.8 134.2 L602.1 139.5 L602.6 143.5 L606.0 148.9M409.0 131.0 L414.3 130.2 L420.5 130.2 L425.7 129.4 L430.9 129.6 L436.6 129.1 L442.6 130.1 L448.9 131.6 L455.0 132.2 L461.0 134.5 L467.5 136.1 L474.2 138.6 L480.5 140.2 L485.7 138.7 L492.0 136.2 L498.4 136.2 L503.9 136.8 L510.6 136.9 L517.1 136.5 L521.3 139.9 L524.8 143.6 L529.5 146.9 L534.1 148.9 L539.4 150.7 L543.5 154.1 L548.8 156.7 L554.3 158.8 L560.3 158.3 L566.9 158.2 L573.5 157.7 L580.7 158.0 L587.2 159.7 L593.2 160.5 L599.8 159.3 L605.9 157.1 L609.6 152.7 L613.0 147.6 L619.7 148.5 L624.9 148.4 L630.9 149.3 L637.7 148.5 L644.9 148.4 L652.0 145.3 L658.5 143.0 L663.1 146.6 L667.4 151.0 L670.2 157.1 L672.9 163.6 L677.4 166.7 L682.0 170.9 L683.7 177.4 L686.3 183.8 L691.3 186.8 L696.9 190.0 L702.4 188.5 L708.3 188.5 L714.0 188.0 L721.1 186.6 L726.9 184.5 L734.1 183.5 L740.8 182.7 L747.1 181.6 L754.2 180.9 L759.7 179.7 L765.8 177.2 L772.1 176.0 L778.2 175.0 L785.5 174.3 L791.8 173.5 L797.9 174.1 L806.0 176.0M409.0 133.0 L411.2 138.4 L413.2 144.1 L416.1 148.6 L420.0 152.2 L424.1 156.6 L428.5 159.5 L432.4 164.9 L437.0 170.8 L439.9 176.0 L443.7 181.6 L446.6 187.8 L451.0 191.2 L454.4 194.3 L459.4 197.6 L462.3 202.5 L466.5 206.3 L467.8 206.5 L470.8 211.0 L474.3 215.9 L477.9 220.5 L480.6 225.9 L484.2 231.1 L490.5 232.6 L496.5 235.9 L501.8 238.6 L509.1 238.2 L515.3 237.4 L521.8 238.0M408.5 134.0 L408.9 141.1 L409.7 148.8 L412.2 154.3 L413.4 159.3 L416.2 163.0 L415.5 169.9 L415.9 176.2 L415.9 181.8 L416.3 188.4 L416.9 193.6 L417.2 199.8 L417.4 205.4 L410.8 209.1 L405.2 212.4 L398.5 214.8 L398.4 220.8 L398.9 225.8 L399.3 231.1 L397.7 236.8 L396.5 243.5 L394.3 250.5 L395.5 256.0 L395.7 262.4 L396.2 269.4 L396.9 274.6 L396.3 281.0 L395.8 287.0 L395.6 293.5 L395.2 300.1 L396.7 305.8 L398.6 311.6 L399.6 317.9 L400.4 324.3 L401.9 330.8 L401.9 337.6 L403.1 343.6 L402.0 350.4 L401.1 357.5 L400.8 363.7 L402.3 370.8 L402.4 377.9 L406.4 382.9 L406.1 389.3 L407.3 395.0 L407.4 400.3 L408.3 405.6 L410.5 410.7 L411.9 415.6 L413.6 420.9 L415.4 425.1 L418.1 430.1 L420.4 435.4 L423.3 440.0 L425.4 445.7 L428.2 451.0 L430.3 456.9 L432.5 463.1 L436.4 466.5 L439.3 471.3M566.0 206.0 L568.6 199.8 L572.4 194.2 L575.0 189.3 L577.9 183.0 L582.4 177.3 L586.0 171.8 L589.8 166.7 L593.4 161.5 L597.1 156.3 L600.6 151.3M806.0 72.5 L799.8 74.6 L794.2 76.0 L789.0 77.0 L783.7 78.6 L778.7 81.1 L773.6 83.6 L768.0 85.6 L763.7 87.8 L758.2 89.1 L754.0 91.1 L748.4 94.2 L743.8 96.1 L739.5 98.7 L733.6 101.4 L729.6 104.8 L724.3 106.7 L718.7 109.9 L714.6 112.1 L709.7 115.6 L704.5 117.9 L698.2 120.7 L693.0 123.6 L687.4 126.1 L681.1 129.6 L675.8 131.9 L669.7 134.2 L664.7 137.9 L659.0 142.7M714.4 188.3 L718.0 193.9 L722.2 200.9 L726.5 206.2 L730.3 210.5 L733.9 215.6 L738.4 216.5 L743.6 217.5 L747.6 221.4 L750.9 225.7 L754.3 230.3 L755.8 236.0 L758.7 240.7 L761.5 245.7 L761.9 251.5 L764.0 256.3 L764.4 261.9 L766.1 267.2 L768.8 274.1 L771.0 280.0M6.0 256.5 L12.1 256.0 L17.3 256.1 L23.9 255.7 L29.8 255.8 L35.2 255.6 L41.2 253.8 L47.6 252.4 L53.4 252.1 L58.8 250.4 L64.8 248.7 L71.0 247.0 L75.8 245.3 L82.1 243.7 L86.9 241.5 L93.5 239.4 L100.0 237.6 L105.8 236.4 L112.3 234.2 L117.6 232.5 L123.4 230.5 L128.0 228.1 L134.1 225.5 L140.5 225.4 L146.6 223.9 L153.3 223.8 L158.4 223.7 L163.6 224.5M164.9 231.9 L165.6 237.8 L167.3 244.1 L167.1 249.1 L168.5 255.5 L169.5 262.0 L170.6 268.0 L172.4 273.9 L173.7 280.4 L172.6 285.6 L173.0 291.7 L172.7 298.7 L172.0 304.8 L173.2 310.4 L173.6 316.7 L175.1 323.4 L175.9 329.3 L177.8 335.1 L178.1 341.1 L179.6 347.1 L181.3 353.6 L181.4 359.9 L182.2 365.5 L182.9 372.2 L183.0 378.6 L182.4 383.3 L181.9 390.0 L180.9 394.8 L179.5 400.7 L178.9 406.3 L175.7 410.6 L171.4 416.4 L169.1 421.0 L166.4 425.3 L164.1 431.2 L162.8 435.8 L161.7 442.0 L160.6 448.4 L159.6 455.6 L158.5 460.8 L156.3 466.7 L153.4 472.1 L148.6 478.4 L146.9 485.4 L143.6 491.7 L141.3 498.3 L138.9 503.9 L136.0 509.2 L135.8 515.6 L133.8 522.7 L132.9 529.4 L132.2 535.3 L131.3 541.1 L130.5 547.1 L129.9 553.6 L129.8 559.7 L130.0 566.1 L129.1 572.0 L129.2 578.9 L128.4 584.0 L128.4 589.4 L127.9 595.0 L127.6 600.3 L127.2 605.4 L126.6 611.9 L126.4 617.8 L126.3 624.8 L126.4 630.7 L128.7 636.8 L131.3 642.5 L133.7 649.4 L135.7 655.6 L133.8 660.9 L132.3 666.3 L131.6 672.5M341.5 406.0 L348.2 403.6 L354.2 401.1 L360.1 398.8 L367.5 397.0 L373.3 396.2 L378.9 392.4 L383.3 389.8 L388.5 387.1 L393.3 383.2 L398.4 378.6 L402.2 376.0 L405.5 373.4 L410.0 368.8 L413.1 363.4 L417.6 360.4 L422.2 356.3 L426.6 352.6 L430.1 348.6 L435.3 345.7 L440.7 341.2 L445.2 337.9 L450.5 333.4 L453.9 329.2 L456.0 325.2 L459.6 320.8 L462.2 316.4 L465.7 311.9 L469.0 306.5 L472.3 302.2 L475.5 296.9 L477.6 291.8 L481.4 287.5 L483.7 282.5 L487.8 277.9 L489.5 271.7 L491.8 266.9 L494.4 260.4 L497.5 255.3 L499.0 249.3 L501.7 242.8 L507.0 238.0M406.0 367.3 L413.8 364.0 L419.1 363.9 L425.8 363.2 L431.1 363.0 L437.4 363.1 L443.0 362.3 L449.3 362.7 L456.3 362.6 L462.6 362.2 L468.0 362.5 L474.8 362.9 L480.5 361.5 L486.7 360.1 L493.2 358.6 L498.4 358.0 L504.0 355.9 L510.4 355.5 L516.0 354.5 L521.8 353.8 L527.8 353.1 L534.2 352.5 L539.9 351.7 L546.9 351.1 L552.6 350.5 L559.1 350.3 L564.6 348.8 L570.1 348.5 L575.7 347.1 L583.3 351.3M521.8 238.0 L526.1 242.5 L529.3 246.4 L533.6 250.3 L535.6 257.3 L538.5 264.0 L540.7 270.4 L541.2 276.5 L542.3 282.5 L544.5 289.6 L547.6 294.9 L550.4 299.7 L553.8 304.7 L555.8 310.2 L559.1 316.6 L562.8 320.2 L566.3 323.1 L570.5 326.3 L574.7 332.7 L578.1 339.0 L580.6 344.7 L583.3 351.3M521.8 238.0 L526.7 234.3 L531.3 231.0 L536.6 228.6 L541.1 223.8 L545.2 219.6 L548.8 216.1 L553.1 210.9 L556.5 206.6 L560.9 205.4 L566.0 206.0M583.3 293.4 L581.0 297.4 L578.6 302.5 L576.3 307.2 L574.7 312.4 L573.1 318.7 L570.8 323.6 L573.7 330.4 L576.0 336.5M583.3 351.3 L586.6 345.3 L590.4 339.0 L596.3 335.2 L601.2 330.4 L605.8 327.2 L611.0 323.0 L615.9 321.1 L621.2 317.8 L625.4 314.9 L630.7 311.4 L635.8 309.4 L640.4 307.1 L645.6 304.1 L649.7 302.5 L655.0 299.9 L660.4 297.3 L665.3 295.1 L670.2 292.5 L675.1 288.7 L679.5 286.7 L685.4 283.9 L691.4 281.1 L696.5 279.8 L703.8 277.4 L709.5 275.0 L714.0 270.4 L719.4 265.1 L724.7 259.8 L728.6 258.0 L734.0 255.9 L739.4 253.5 L743.4 250.7 L748.9 246.1 L754.2 242.9 L760.2 240.9 L766.1 238.5 L772.2 235.9 L778.9 233.4 L783.5 231.0 L789.4 228.8 L794.9 226.0 L801.0 224.2 L806.0 222.0M583.3 351.3 L580.5 355.8 L576.6 359.7 L572.9 363.4 L569.0 369.0 L563.8 374.1 L560.3 378.9 L557.4 383.0 L553.6 388.7 L550.7 394.0 L547.7 401.0 L545.7 407.4 L541.1 411.9 L536.8 416.0 L532.3 421.4 L528.8 425.8 L523.7 430.3 L520.7 435.7 L517.1 440.3 L513.2 444.2 L509.9 449.0 L504.6 451.6 L499.2 454.0 L494.1 456.8 L489.1 459.6 L484.2 462.5 L478.5 465.1 L473.1 466.7 L467.7 469.4 L461.5 471.7 L456.2 471.5 L450.0 471.2 L445.0 471.9 L439.3 471.3M583.3 351.3 L585.2 357.0 L588.3 363.5 L591.6 368.1 L594.3 373.6 L598.4 379.0 L601.2 383.6 L603.4 388.0 L605.6 392.8 L608.7 399.0 L612.2 406.5 L616.0 410.7 L620.6 415.5 L624.1 420.0 L628.1 424.3 L630.2 428.3 L633.2 432.5 L632.2 438.5 L631.2 443.6 L631.7 449.7 L631.0 455.0 L630.7 461.6 L629.7 468.1 L629.5 473.3 L628.9 479.7 L630.2 486.2 L629.5 492.0 L630.2 498.4 L630.4 504.4 L632.8 511.5 L633.4 517.5 L635.9 524.7 L638.5 530.2 L641.6 535.9 L645.9 541.0 L646.8 547.1 L647.6 552.6 L649.1 558.2 L650.3 564.5 L652.0 570.5 L653.3 577.0 L654.8 583.0 L656.5 588.6 L657.7 594.5 L659.6 600.7 L660.2 606.2 L663.9 612.3 L667.7 618.4 L671.4 623.7 L675.5 628.3 L680.5 633.5 L684.0 637.3 L688.2 641.7 L692.6 645.9 L696.3 650.3 L700.1 655.0 L704.0 659.1 L707.0 663.4 L709.8 667.6 L712.2 672.6 L714.0 677.8 L717.5 683.7 L719.0 689.6 L720.8 694.4 L722.0 699.5 L724.8 704.4 L727.8 709.1 L730.8 714.9 L733.5 719.2 L736.7 724.7 L738.6 728.9 L741.7 734.5 L743.8 739.4 L745.2 746.0 L747.9 750.7 L747.5 756.7 L747.9 763.0 L748.4 768.2 L750.6 773.3 L751.7 778.5 L754.3 782.8 L755.0 792.0M583.3 351.3 L589.3 351.4 L594.4 352.4 L600.3 353.7 L605.8 353.3 L610.5 355.1 L615.5 358.0 L621.4 359.8 L625.6 360.8 L631.3 362.1 L637.8 364.1 L643.6 365.2 L649.5 366.1 L655.5 366.8 L661.0 367.7 L667.3 367.4 L672.6 368.3 L679.0 368.8 L684.3 369.1 L690.2 369.8 L696.6 370.4 L702.2 370.7 L707.9 371.6 L714.3 372.4 L719.8 372.5 L725.5 372.9 L732.2 373.5 L737.4 373.1 L743.2 373.3 L748.3 372.9 L754.4 371.2 L760.5 368.8 L766.5 366.3 L771.5 364.1 L777.6 361.5 L783.2 358.6 L788.6 355.7 L792.6 353.3 L798.5 351.6 L801.8 346.9 L806.0 341.5M739.0 254.0 L741.1 259.2 L744.2 265.2 L749.3 268.7 L754.2 271.5 L758.1 274.4 L765.0 277.0 L770.7 280.0 L775.3 283.6 L779.5 286.3 L783.9 290.0 L788.6 294.2 L792.8 299.7 L797.8 302.1 L801.7 305.1 L806.0 308.2M6.0 460.2 L12.5 460.9 L18.8 462.0 L25.0 462.4 L30.2 463.5 L36.4 464.4 L42.9 465.4 L49.2 465.5 L55.9 466.3 L60.8 467.3 L66.4 469.9 L71.8 470.5 L78.0 472.4 L83.5 474.0 L88.5 474.6 L95.0 475.7 L101.2 475.0 L107.9 474.0 L113.9 471.9 L120.7 472.2 L127.2 473.1 L133.6 472.0 L138.5 474.4 L144.4 476.8 L148.4 479.0 L154.1 480.4 L160.2 479.4 L166.5 479.7 L172.5 479.3 L178.7 478.6 L183.4 478.4 L188.9 477.6 L195.4 477.6 L200.5 477.2 L205.9 476.6 L211.9 476.0 L218.9 475.3 L224.6 474.9 L230.2 474.7 L236.8 474.9 L241.8 474.1 L247.4 473.7 L253.2 474.3 L258.8 473.5 L263.7 472.6 L269.1 470.3 L275.3 469.0 L279.9 468.0 L284.4 463.0 L289.9 458.9 L294.5 452.9 L299.3 448.5 L302.8 443.2 L305.6 440.2 L309.5 435.2 L314.1 431.9 L317.3 426.9 L321.7 423.6 L326.3 419.3 L329.5 415.6 L334.0 411.9 L338.1 409.0 L341.5 406.0M259.0 473.7 L256.4 479.4 L253.0 485.1 L251.4 489.4 L249.3 495.1 L247.6 500.1 L245.4 504.8 L242.6 509.4 L240.3 513.8 L236.6 519.7 L235.4 526.8 L231.4 530.9 L228.0 533.8 L224.7 538.5 L221.0 543.8 L218.7 548.7 L215.6 553.9 L215.4 560.0 L216.1 566.6 L215.5 574.0 L214.8 578.2 L213.2 582.9 L212.3 588.8 L209.9 594.4 L208.7 601.1 L205.7 606.1 L201.8 612.6 L197.8 618.0 L195.6 624.9 L193.0 630.5 L191.2 635.8 L188.3 640.9 L185.4 644.9 L185.5 650.7 L184.6 655.3M439.3 471.3 L436.6 478.0 L432.7 484.7 L431.7 490.2 L429.3 494.3 L428.1 499.8 L425.7 504.8 L421.9 510.7 L418.8 515.6 L415.8 522.2 L412.9 527.1 L409.0 532.1 L405.9 536.4 L402.1 541.0 L398.1 547.0 L394.6 551.3 L390.3 555.2 L386.7 559.8 L383.6 563.2 L378.8 566.7 L374.1 569.9 L370.5 573.0 L366.5 576.5 L360.4 579.6 L355.3 583.7 L349.0 586.8 L343.8 590.4 L339.3 593.2 L333.5 595.9 L329.3 598.6 L323.2 600.9 L317.6 603.6 L311.9 606.2 L306.7 613.1 L306.2 618.3 L305.8 623.6 L304.5 630.6M628.2 423.2 L632.7 426.6 L637.6 429.4 L641.8 435.3 L644.9 440.2 L650.2 443.8 L655.5 447.0 L660.6 450.1 L665.2 452.1 L669.7 454.9 L674.8 457.3 L680.0 459.1 L686.5 460.8 L692.7 462.0 L698.8 463.6 L704.5 465.2 L710.9 465.9 L716.3 466.7 L722.6 467.4 L728.8 467.2 L735.1 468.0 L741.1 469.1 L747.2 471.0 L752.9 471.2 L759.1 472.3 L764.2 474.0 L769.0 475.9 L773.4 477.9 L778.1 480.1 L784.9 481.8 L791.3 484.4 L798.2 486.1 L802.0 489.7 L806.0 493.4M806.0 534.0 L803.7 539.0 L802.0 543.7 L801.6 551.3 L801.5 559.2 L800.0 564.1 L797.6 568.8 L795.1 573.0 L793.3 577.8 L790.6 583.1 L788.7 588.7 L787.5 594.6 L785.9 599.7 L785.0 605.4 L785.8 610.7 L787.5 616.1 L788.5 620.7 L787.4 627.6 L786.5 635.7 L783.8 642.9 L778.2 650.0 L778.7 656.1 L778.9 662.9 L782.9 665.7 L788.5 667.4 L791.4 671.0 L795.2 675.6 L799.9 680.6 L803.0 687.7 L806.0 694.7M6.0 661.4 L11.0 659.7 L16.2 659.1 L21.2 657.5 L25.2 655.2 L30.1 653.3 L36.0 651.7 L41.2 649.9 L47.1 648.9 L53.3 646.6 L59.6 645.7 L65.4 644.1 L71.6 644.2 L76.9 644.5 L83.2 643.8 L89.3 643.7 L95.7 642.9 L102.9 641.4 L109.5 639.9 L116.7 640.3 L124.5 641.0 L131.4 641.1 L138.0 641.4 L143.9 641.7 L150.7 643.9 L157.0 645.5 L163.4 648.5 L168.7 649.4 L173.1 651.6 L178.8 654.1 L182.9 654.8 L188.1 655.7 L193.9 654.1 L199.6 653.5 L206.4 653.0 L210.6 650.9 L216.0 649.9 L221.4 648.1 L226.6 647.4 L231.8 646.5 L237.2 645.0 L242.5 644.4 L249.5 644.0 L256.0 643.6 L262.5 643.0 L268.8 643.5 L274.6 643.2 L281.3 640.8 L286.0 639.8 L292.7 638.2 L298.9 634.9 L304.3 630.6 L307.7 626.9 L312.4 623.8 L318.0 623.3 L324.5 624.1 L330.6 626.2 L337.0 626.8 L344.0 628.5 L348.7 628.9 L354.0 630.5 L358.1 632.0 L363.7 634.5 L368.7 636.3 L373.0 638.4 L378.4 636.9 L383.5 636.5 L387.3 633.7 L391.9 631.2 L396.0 628.6 L400.3 624.4 L406.1 620.4 L412.8 620.2 L419.6 619.1 L425.2 618.5 L431.9 618.4 L437.5 616.9 L443.6 616.9 L448.4 618.2 L454.3 618.2 L460.1 619.5 L465.9 618.3 L472.0 616.9 L477.4 615.8 L482.8 616.4 L488.8 616.9 L495.1 617.2 L501.6 616.8 L508.1 616.1 L515.0 616.8 L519.7 617.7 L524.5 619.3 L528.8 621.1 L534.1 622.0 L538.9 623.7 L543.9 625.9 L549.0 627.6 L554.1 629.3 L558.8 630.6 L563.2 632.8 L568.1 634.6 L573.0 636.3 L578.7 637.1 L582.8 639.0 L588.7 639.5 L594.5 639.2 L600.0 639.8 L606.2 639.8 L612.2 640.4 L619.6 641.4 L625.3 642.5 L632.1 643.2 L638.1 644.0 L644.6 645.3 L650.5 645.5 L656.0 646.6 L663.2 648.7 L668.7 650.0 L675.3 651.5 L680.7 653.7 L686.8 654.1 L693.2 655.6 L699.3 657.8 L704.0 659.3 L709.3 659.7 L714.6 661.9 L721.0 661.8 L726.8 662.1 L732.7 661.7 L739.0 662.8 L745.8 661.1 L752.2 660.2 L758.4 659.5 L765.2 657.2 L772.3 656.7 L778.6 655.5 L785.8 654.0M6.0 615.9 L9.7 620.4 L12.4 625.3 L12.8 631.0 L12.4 636.8 L13.3 643.2 L13.9 648.0 L15.0 653.7 L15.9 659.0M89.7 644.2 L91.2 650.0 L91.9 655.8 L96.3 658.9 L100.3 664.0 L104.4 667.3 L110.4 670.6 L117.1 673.0 L123.8 673.4 L131.7 673.7 L137.3 677.2 L143.9 679.7 L149.2 682.0 L153.9 683.4 L159.1 684.8 L166.1 680.2 L170.3 675.5 L174.8 671.4 L178.3 668.1 L181.9 662.0 L185.8 655.3" stroke="#86700f"/>
<ellipse cx="168.5" cy="226.5" rx="7.5" ry="5.5" stroke="#86700f"/>
<ellipse cx="583.3" cy="351.3" rx="8.6" ry="8.6" stroke="#86700f"/>
<ellipse cx="401.0" cy="131.0" rx="35.0" ry="31.0" stroke="#86700f"/>
<ellipse cx="783.0" cy="660.0" rx="7.0" ry="9.0" stroke="#86700f"/>
<path d="M6.0 105.3 L154.5 105.3 L156.2 112.0 L161.0 114.4 L160.7 121.8 L156.2 128.0 L148.9 132.8 L141.5 142.7 L137.8 148.9 L187.0 148.9M203.0 105.5 L312.0 105.3 L309.5 89.7 L325.5 92.2 L406.0 90.2 L455.0 92.7 L509.4 93.4 L553.8 95.2 L606.0 96.6 L635.6 96.6 L704.5 96.2 L766.0 95.2 L787.0 94.2 L806.0 98.4M142.7 238.0 L299.6 238.0 L406.0 238.3 L492.2 238.8 L588.3 238.8 L606.0 238.8 L678.7 238.0M299.6 238.0 L303.3 244.2 L307.0 247.9 L305.8 267.6 L303.3 287.3 L299.6 321.8 L295.9 353.8 L293.4 378.4 L291.0 406.0 L287.3 435.6 L283.6 467.6 L279.9 499.6 L279.2 516.8 L280.4 544.0 L281.9 573.5 L283.6 606.0 L284.8 630.6 L285.3 650.3M492.2 238.8 L495.9 255.3 L499.6 277.4 L504.5 304.5 L509.4 334.0 L513.0 358.7 L516.8 383.3 L520.5 406.0M344.0 595.2 L536.5 595.2M547.6 620.3 L606.0 622.7 L655.3 625.7 L704.5 629.4 L726.0 631.2 L744.0 631.6M6.0 415.4 L78.7 415.4M45.4 594.4 L185.8 594.4M201.0 6.0 L201.4 10.0 L204.1 13.3 L204.0 17.9 L206.1 21.9 L203.2 25.7 L204.7 29.9 L202.8 33.3 L203.7 37.0 L204.4 40.6 L208.6 42.3 L209.6 45.9 L213.3 47.6 L213.3 51.2 L217.9 53.1 L218.3 56.9 L221.4 58.3 L225.7 56.0M310.3 6.0 L308.6 11.1 L308.3 16.7 L304.0 17.2 L299.4 19.2 L294.2 19.7 L290.6 22.7 L284.9 21.8 L281.5 24.9 L276.8 28.3 L275.9 32.9 L276.8 37.7 L280.9 39.9 L281.8 44.8 L282.5 49.0 L280.3 52.7 L277.3 52.6 L273.6 51.2 L269.3 49.3 L266.3 45.3 L262.2 43.5 L259.0 40.0 L254.0 40.2 L248.5 39.4 L243.7 39.3 L238.6 41.6 L234.9 47.0 L231.1 48.4 L229.3 53.2 L225.7 56.0M225.7 56.0 L225.9 56.4 L225.9 57.3 L225.8 58.1 L225.9 59.0 L226.5 60.6 L227.3 62.0 L227.9 62.7 L229.2 62.3 L231.3 61.1 L233.1 60.5 L233.9 61.2 L234.5 62.7 L234.8 64.5 L235.3 66.3 L234.8 67.9 L233.7 68.6 L231.5 68.4 L229.4 67.9 L228.2 67.9 L227.4 68.5 L226.9 69.9 L226.5 71.5 L226.3 72.8 L226.1 73.7 L226.9 74.3 L229.0 75.0 L230.8 75.7 L231.5 76.4 L231.2 77.4 L230.4 78.7 L229.9 80.2 L229.4 81.6 L228.7 82.3 L227.5 82.0 L225.6 81.1 L223.7 80.2 L222.5 80.3 L221.9 81.5 L221.1 83.3 L220.5 85.2 L220.3 86.5 L221.5 87.1 L224.4 87.5 L227.0 88.0 L227.8 88.9 L227.4 90.7 L226.6 92.8 L225.7 94.4 L224.7 94.9 L222.3 93.4 L220.3 91.8 L219.6 91.9 L218.8 92.5 L217.8 93.7 L216.7 94.7 L216.5 95.5 L217.6 96.8 L219.7 99.3 L220.5 101.2 L219.0 102.2 L216.4 103.0 L214.1 103.2 L213.1 102.3 L213.0 99.5 L213.2 96.5 L212.9 95.5 L211.7 95.4 L209.7 95.2 L207.9 95.2 L206.6 95.5 L206.3 96.5 L207.1 99.1 L208.2 101.3 L208.1 101.8 L207.1 102.0 L205.8 102.7 L204.7 103.3 L204.1 103.9 L203.6 103.5 L202.4 101.5 L200.5 99.5 L199.2 99.5 L197.8 101.6 L196.9 103.5 L196.5 105.1 L197.1 105.9 L199.9 106.7 L202.6 107.6 L203.4 108.5 L203.0 109.8 L202.1 111.5 L201.2 113.0 L200.3 114.0 L199.3 113.9 L197.8 112.9 L195.9 111.4 L194.4 110.3 L193.5 110.4 L192.8 111.4 L191.8 112.8 L190.8 114.4 L190.6 115.7 L190.9 116.6 L192.5 117.3 L194.7 118.2 L195.8 118.7 L195.8 119.3 L195.4 120.4 L195.0 121.8 L194.4 123.3 L193.5 123.7 L191.2 123.0 L188.8 122.7 L188.1 123.5 L188.1 125.2 L188.3 127.4 L189.0 128.8 L190.2 129.1 L192.4 128.3 L194.4 127.7 L195.6 127.7 L196.3 128.7 L196.6 130.6 L197.0 132.5 L196.7 133.6 L195.4 134.0 L193.1 133.9 L192.0 134.0 L191.6 134.9 L191.0 136.3 L190.8 137.9 L190.6 139.0 L191.3 139.6 L193.2 140.2 L194.5 140.8 L194.8 141.8 L194.2 143.2 L193.8 144.7 L193.1 146.0 L192.6 146.8 L191.6 146.6 L189.8 145.9 L188.3 145.6 L187.2 146.1 L186.5 147.6 L186.4 149.4 L186.4 150.9 L186.7 151.8 L187.5 152.2 L189.0 152.5 L190.5 152.7 L191.5 153.1 L192.3 153.8 L192.4 155.0 L192.4 156.5 L191.7 158.1 L191.1 159.2 L190.2 159.5 L188.7 158.9 L187.2 157.9 L186.0 157.2 L185.1 157.5 L184.0 158.6 L182.7 159.7 L182.0 160.7 L182.0 161.6 L183.1 162.8 L184.5 164.3 L184.8 165.2 L184.4 166.1 L183.4 167.1 L182.2 168.2 L181.1 169.2 L180.1 169.2 L179.3 168.5 L178.2 167.2 L177.0 165.9 L176.1 165.2 L175.2 165.5 L174.1 166.6 L173.1 167.9 L172.3 169.3 L172.0 170.4 L172.1 171.2 L173.4 172.0 L174.7 172.5 L175.1 172.8 L175.0 173.6 L174.8 175.0 L174.8 176.4 L174.9 177.6 L174.8 178.2 L173.8 178.3 L172.2 177.9 L171.7 177.9 L171.7 178.7 L172.0 179.9 L171.7 181.3 L171.5 182.5 L171.6 182.9 L172.3 183.2 L173.6 183.7 L174.7 184.5 L174.7 185.5 L173.6 186.8 L172.5 188.2 L171.4 188.9 L170.5 189.0 L169.2 188.0 L167.9 187.2 L167.1 187.3 L166.4 188.1 L165.7 189.3 L164.8 190.3 L164.4 191.2 L164.5 192.0 L165.1 192.8 L166.0 193.8 L166.1 194.6 L165.8 195.4 L165.1 196.3 L164.2 197.3 L163.5 198.4 L162.7 198.8 L161.7 198.5 L160.5 197.9 L159.5 197.6 L158.6 198.1 L157.7 199.1 L156.8 200.3 L156.2 201.3 L156.0 202.2 L156.9 203.0 L158.3 203.8 L158.9 204.4 L158.8 205.5 L158.5 207.0 L157.9 208.3 L157.3 208.9 L155.9 208.9 L154.1 208.8 L153.5 209.4 L153.4 210.7 L153.3 212.2 L153.7 213.5 L153.9 214.5 L154.6 214.7 L156.6 214.4 L158.0 214.5 L158.6 215.5 L159.5 216.9 L159.7 218.4 L159.5 219.3 L158.3 219.8 L157.1 220.1 L156.6 220.7 L156.5 221.8 L156.3 223.3 L156.3 224.4 L156.7 225.0 L158.3 225.8 L158.8 226.7 L158.2 227.7 L157.2 228.8 L156.1 229.7 L154.9 229.6 L153.6 228.5 L152.4 227.3 L151.3 227.5 L150.1 228.1 L149.1 229.0 L148.6 229.8 L149.0 230.8 L150.2 232.1 L150.4 232.8 L149.5 233.7 L148.5 234.8 L147.7 235.4 L146.7 235.0 L145.2 234.5 L144.2 234.7 L143.7 236.1 L143.3 237.8 L143.8 238.8 L145.4 239.1 L147.4 239.3 L148.3 240.3 L148.7 241.9 L148.8 243.4 L148.3 244.0 L146.5 243.6 L145.0 243.2 L144.4 243.8 L143.8 245.4 L143.3 246.5 L144.2 247.3 L145.6 248.5 L145.3 249.7 L143.7 251.0 L142.3 251.5 L141.1 250.1 L140.6 249.0 L140.0 249.3 L138.9 249.7 L137.6 250.0 L137.1 250.7 L137.1 252.3 L136.8 253.2 L135.9 253.0 L134.6 253.0 L133.5 252.5 L133.2 250.8 L132.9 249.2 L132.6 247.5 L131.3 247.0 L129.0 248.3 L128.5 249.8 L129.6 251.5 L131.2 253.0 L131.2 253.8 L130.4 254.9 L129.9 256.1 L129.3 256.5 L127.8 256.0 L126.2 255.6 L125.3 256.1 L124.8 257.2 L124.6 258.6 L124.7 259.7 L125.1 260.3 L126.8 260.4 L128.2 260.7 L129.1 261.5 L129.5 263.0 L129.5 264.3 L129.3 265.0 L128.2 265.0 L126.7 264.7 L125.6 264.9 L125.0 265.9 L124.0 267.4 L123.6 268.3 L125.0 268.9 L126.9 269.5 L127.0 270.6 L126.4 272.6 L125.9 273.6 L125.3 273.9 L124.1 273.5 L122.6 273.2 L121.7 273.4 L121.2 274.3 L120.8 275.9 L120.7 277.5 L121.1 278.4 L122.4 278.8 L124.2 279.0 L124.8 279.7 L125.0 280.9 L124.8 282.6 L124.3 284.0 L123.7 284.7 L122.2 284.5 L121.1 284.5 L120.6 285.1 L120.1 286.1 L119.6 287.3 L119.3 288.2 L119.1 288.9 L119.5 289.5 L120.4 290.3 L121.0 291.1 L120.9 291.7 L120.3 292.3 L119.3 292.9 L118.3 293.4 L117.2 294.2 L116.2 294.2 L115.1 293.6 L114.0 293.0 L113.4 293.3 L112.6 293.9 L111.8 295.1 L111.1 296.3 L110.8 297.2 L111.7 298.3 L113.2 299.7 L113.6 300.7 L112.7 301.7 L111.2 303.1 L110.0 303.8 L109.0 303.6 L107.8 302.2 L106.6 300.5 L105.6 300.0 L104.7 300.5 L103.5 301.6 L102.4 302.8 L101.7 304.0 L102.0 304.9 L103.5 305.9 L105.5 306.9 L106.5 307.8 L106.0 309.1 L105.3 310.8 L104.0 312.2 L103.0 312.1 L101.1 310.5 L99.7 309.6 L98.4 309.9 L97.1 311.2 L95.9 312.5 L95.3 313.3 L95.9 313.9 L97.6 314.4 L99.3 314.8 L99.9 315.3 L100.1 316.5 L100.3 318.3 L100.3 319.5 L99.9 319.8 L98.9 319.5 L96.9 318.8 L96.4 319.1 L96.1 320.4 L95.4 321.9 L94.9 322.8 L96.3 323.6 L97.9 324.4 L97.8 325.2 L97.1 326.3 L95.7 327.4 L94.5 328.2 L93.6 328.0 L92.8 326.9 L91.7 325.2 L90.7 324.4 L88.9 324.9 L86.8 326.6 L85.9 327.9 L87.7 328.9 L90.3 329.7 L90.9 330.2 L90.6 331.5 L90.0 333.1 L89.8 334.4 L88.1 334.0 L85.8 333.5 L85.1 334.0 L85.0 335.5 L85.5 337.3 L85.7 338.7 L86.7 339.0 L88.7 338.6 L91.0 338.4 L92.2 338.9 L92.2 341.2 L91.7 343.8 L90.1 344.4 L87.3 342.6 L85.9 341.9 L84.8 342.9 L83.5 344.7 L83.1 345.9 L84.9 346.7 L87.4 347.7 L87.7 348.3 L86.3 349.8 L85.5 351.1 L84.5 351.3 L82.8 350.0 L80.5 348.6 L79.8 348.6 L79.2 350.2 L79.1 352.0 L79.7 353.0 L82.4 353.4 L85.9 354.4 L87.1 355.5 L86.1 357.6 L84.1 358.9 L82.7 359.1 L81.4 357.4 L79.7 353.9 L78.5 352.0 L76.8 352.3 L74.9 353.7 L74.4 354.9 L76.1 356.5 L78.9 358.1 L79.0 359.0 L78.6 360.3 L78.4 361.6 L77.6 361.6 L75.6 361.1 L73.4 361.0 L72.8 361.7 L73.0 363.8 L73.8 365.8 L75.2 365.9 L78.0 365.1 L79.4 365.6 L80.3 367.3 L80.4 368.8 L80.1 369.6 L78.7 369.8 L77.3 370.0 L76.6 370.7 L76.1 372.1 L75.5 373.7 L76.0 374.1 L77.3 374.1 L77.7 374.4 L77.9 375.1 L78.0 376.2 L78.3 377.2 L78.6 377.7 L77.7 378.4 L76.8 379.8 L77.3 380.7 L78.3 381.2 L79.5 381.4 L80.4 381.5 L81.1 380.9 L81.7 379.0 L82.6 376.8 L83.7 376.1 L85.1 376.5 L85.8 378.3 L85.1 379.4 L83.6 380.0 L82.2 380.3 L81.4 380.7 L81.1 381.9 L80.9 383.2 L80.7 384.3 L81.5 384.9 L83.3 385.0 L84.0 385.4 L84.1 386.6 L84.1 388.1 L83.9 389.1 L83.6 389.6 L82.5 389.9 L81.6 390.3 L81.6 391.1 L82.3 392.6 L82.8 393.9 L83.8 394.5 L85.4 394.5 L86.5 394.8 L86.8 395.7 L86.6 397.0 L86.3 398.4 L85.7 399.4 L84.7 399.7 L83.4 399.3 L82.4 399.0 L82.0 399.4 L81.2 400.2 L80.1 401.7 L79.7 402.9 L79.9 403.6 L81.0 404.1 L81.4 404.3 L81.3 404.5 L80.7 406.0 L80.6 407.7 L80.7 408.3 L80.5 408.4 L79.3 408.2 L78.7 408.3 L78.5 409.1 L79.1 410.5 L79.4 411.8 L79.5 412.7 L79.8 413.0 L81.2 412.9 L82.8 413.0 L83.4 413.8 L83.2 415.2 L82.5 416.7 L81.8 417.6 L80.5 417.4 L77.7 416.3 L76.2 416.5 L75.4 418.0 L75.3 419.9 L75.7 421.7 L77.5 421.2 L79.3 419.7 L80.4 418.9 L81.4 418.6 L82.6 419.1 L83.7 419.6 L84.6 420.2 L84.2 420.9 L83.2 421.9 L82.5 422.4 L82.5 423.0 L82.9 423.8 L83.1 425.1 L83.0 426.2 L83.4 426.7 L84.9 427.0 L85.8 427.6 L85.7 428.5 L85.2 429.6 L84.5 430.9 L83.7 431.8 L82.6 432.0 L81.2 431.8 L79.7 431.7 L79.2 432.6 L79.0 434.2 L79.0 435.5 L79.1 436.7 L79.6 437.4 L80.8 437.7 L82.2 437.8 L83.0 438.1 L83.6 439.0 L84.1 440.3 L84.5 441.7 L84.8 442.6 L83.9 443.2 L82.4 444.0 L81.6 444.8 L81.9 445.8 L82.5 447.2 L83.5 448.7 L84.4 449.4 L85.0 449.4 L86.4 448.4 L87.4 448.1 L88.1 448.6 L89.0 449.2 L90.7 449.9 L91.5 449.7 L91.4 449.9 L89.8 450.8 L88.5 451.4 L87.9 451.9 L88.0 452.7 L88.0 453.8 L87.7 454.8 L87.6 455.4 L87.9 455.9 L88.8 456.4 L90.5 457.2 L90.8 458.0 L90.3 459.0 L89.5 460.3 L88.9 461.3 L87.9 461.6 L86.8 461.6 L85.4 461.8 L84.7 462.3 L84.5 463.1 L84.9 464.2 L85.6 465.6 L86.9 466.7 L88.1 467.0 L89.4 466.4 L90.5 465.5 L91.3 465.4 L92.3 465.9 L93.3 466.7 L94.3 467.4 L95.0 467.8 L95.1 468.5 L94.7 469.4 L94.3 470.1 L94.1 470.6 L94.6 470.9 L95.8 471.9 L97.0 472.9 L97.8 473.5 L99.0 473.4 L100.3 473.5 L100.6 474.1 L100.6 475.2 L100.3 476.3 L99.8 477.6 L99.1 478.5 L98.4 479.0 L97.6 479.0 L96.5 478.2 L95.2 477.2 L94.4 477.1 L93.6 477.8 L92.6 478.7 L91.7 479.7 L91.4 480.5 L92.3 481.8 L93.5 483.3 L93.4 484.1 L93.0 485.2 L92.1 486.2 L90.9 487.2 L90.0 487.5 L89.3 486.6 L88.6 485.3 L87.8 484.7 L86.7 484.5 L85.0 484.4 L83.7 484.5 L83.6 485.1 L84.1 486.1 L84.5 486.9 L84.3 487.4 L83.6 488.3 L83.0 489.2 L82.7 489.9 L80.5 489.3 L78.6 489.5 L77.8 490.8 L78.5 492.5 L79.4 494.3 L81.0 495.2 L82.4 494.8 L83.7 492.2 L84.6 491.1 L86.0 491.2 L87.6 491.8 L88.9 492.1 L89.3 492.5 L87.9 493.5 L86.2 493.6 L86.3 493.3 L86.5 494.6 L86.4 496.2 L86.8 496.4 L88.8 495.8 L90.9 495.8 L91.5 496.9 L91.2 498.7 L90.2 500.6 L89.4 501.5 L87.3 499.9 L85.5 498.6 L84.3 499.8 L83.0 501.3 L82.8 502.3 L84.0 503.0 L85.9 504.0 L86.2 504.9 L85.1 506.1 L83.7 507.7 L82.6 507.8 L80.7 505.4 L79.3 504.5 L78.4 505.8 L77.2 507.2 L77.0 508.4 L78.3 509.5 L80.0 510.8 L80.3 511.8 L79.3 512.9 L78.0 514.0 L77.1 514.7 L76.1 513.8 L74.8 512.2 L74.1 511.8 L73.1 512.4 L71.9 513.4 L71.1 514.1 L71.4 515.0 L72.7 516.3 L73.1 517.1 L72.0 518.5 L70.6 519.8 L69.3 518.9 L67.0 516.9 L65.6 517.6 L64.2 519.6 L64.0 521.0 L64.8 521.6 L67.3 521.5 L69.0 521.6 L69.7 522.6 L70.1 524.5 L70.2 525.7 L68.5 524.6 L67.6 524.0 L67.8 524.5 L67.5 525.9 L66.6 527.3 L67.5 527.3 L68.3 527.6 L67.7 528.6 L66.3 529.7 L65.2 530.3 L63.9 529.4 L62.8 528.8 L61.8 529.9 L61.0 531.1 L60.8 532.2 L61.8 533.2 L63.2 534.2 L63.6 535.0 L63.3 536.1 L62.0 537.7 L60.9 538.1 L58.9 536.4 L57.2 535.9 L56.1 536.6 L55.2 537.9 L54.6 538.8 L54.8 539.3 L56.1 539.7 L57.8 540.4 L58.4 542.0 L58.7 543.3 L59.2 544.2 L58.8 544.2 L57.3 543.5 L55.6 543.0 L54.9 543.5 L54.1 545.2 L53.4 546.9 L53.5 547.5 L54.9 547.9 L57.2 548.7 L58.1 549.6 L57.6 550.9 L56.7 552.8 L55.7 554.3 L54.8 554.7 L53.4 553.5 L51.0 551.5 L49.0 550.8 L47.9 551.8 L47.2 553.9 L46.7 556.2 L46.8 557.8 L47.9 558.1 L50.7 557.0 L53.6 556.2 L55.1 558.3 L55.9 559.8 L56.2 560.2 L54.4 560.1 L51.8 559.9 L50.6 560.1 L50.6 561.1 L50.4 563.1 L50.4 564.4 L51.9 564.2 L55.2 564.6 L56.3 565.8 L55.8 567.3 L54.5 568.8 L53.3 570.1 L52.1 570.2 L50.1 567.5 L48.4 565.5 L46.9 566.2 L44.8 567.5 L43.9 568.7 L44.5 569.4 L46.5 570.2 L48.1 570.7 L48.7 571.2 L48.7 572.6 L48.4 574.5 L48.5 575.3 L47.5 575.2 L45.2 574.5 L43.9 574.8 L44.1 576.7 L44.4 578.7 L44.8 579.7 L46.2 579.8 L47.9 579.6 L48.2 579.8 L47.7 581.0 L47.6 582.3 L47.4 583.5 L47.1 584.1 L45.5 584.2 L43.7 584.2 L43.5 585.0 L44.2 586.8 L45.1 588.4 L46.5 588.4 L49.2 588.0 L50.4 588.2 L50.6 589.4 L50.1 591.0 L49.3 592.1 L48.1 592.6 L46.8 592.6 L45.6 593.0 L45.3 593.8 L45.4 594.4M635.6 96.2 L640.0 94.1 L642.3 90.9 L647.5 89.6 L650.7 87.4 L655.4 86.6 L659.8 84.6 L665.0 85.1 L670.3 82.6 L675.4 82.9 L676.8 78.7 L680.1 77.1 L684.4 73.8 L690.4 72.8 L694.5 69.9 L697.6 65.5 L698.2 61.0 L702.6 59.1 L706.2 55.2 L708.2 49.2 L712.3 46.7 L717.0 44.9 L721.6 41.9 L726.1 40.2 L729.9 38.1 L734.7 36.6 L739.3 33.7 L743.9 31.8 L746.7 27.6 L751.7 24.9 L754.9 20.0 L759.7 17.5 L762.7 13.1 L757.7 9.3 L753.0 8.6 L748.9 6.0M763.6 13.4 L764.1 17.4 L766.3 20.7 L763.4 24.6 L766.6 27.1 L770.1 30.5 L774.5 33.9 L778.0 37.7 L782.6 39.0 L785.4 42.1 L790.9 40.1 L797.1 39.8 L800.9 35.1 L806.0 31.9M787.0 94.2 L785.3 98.9 L783.4 104.4 L781.1 109.4 L781.3 114.4 L782.2 118.7 L775.6 118.1 L772.5 120.0 L768.5 123.7 L766.1 126.4 L764.0 130.8 L761.0 134.1 L757.5 137.0 L753.7 139.2 L748.7 139.2 L743.8 135.7 L738.9 139.2 L734.1 140.2 L731.2 145.0 L726.2 148.7 L722.8 151.9 L719.6 152.6 L716.1 149.3 L714.4 144.8 L708.9 146.6 L703.9 150.0 L700.8 154.7 L694.0 155.0 L694.1 159.3 L693.1 163.4 L689.4 166.2 L684.3 168.0 L680.0 169.3 L674.9 172.4 L669.6 175.8 L665.0 177.7 L660.8 179.4 L656.2 182.4 L654.2 185.8 L650.1 187.3 L645.3 188.6 L640.4 187.8 L635.1 188.6 L630.2 187.8 L626.9 190.1 L622.1 190.1 L618.4 191.8 L614.4 196.0 L611.0 200.6 L610.6 206.0 L610.3 210.9 L605.9 215.0 L600.3 215.4 L595.8 214.4 L591.0 217.2 L590.3 221.4 L590.9 226.1 L589.4 230.8 L589.6 234.4 L588.3 238.8M678.7 238.0 L687.2 235.4 L695.3 232.8 L704.2 231.0 L710.1 227.8 L716.8 226.2 L723.9 222.7 L732.1 221.1 L737.7 220.5 L743.8 220.6 L751.7 220.0 L759.2 221.0 L767.0 221.5 L774.5 222.0 L782.3 221.8 L790.1 222.9 L798.3 223.1 L806.0 223.2M678.7 238.0 L676.3 241.6 L675.5 245.9 L669.3 248.7 L665.0 253.5 L661.5 258.4 L660.6 263.6 L663.0 267.7 L666.7 270.3 L670.0 274.4 L673.3 275.6 L676.8 279.1 L681.3 280.6 L684.2 284.1 L689.5 283.0 L694.0 284.6 L697.9 289.3 L698.7 295.1 L703.1 299.0 L704.8 304.4 L708.0 311.6 L708.9 315.6 L712.0 318.6 L713.7 323.4 L717.6 326.3 L720.2 330.1 L724.4 333.4 L727.7 336.8 L732.2 338.8 L735.2 342.2 L739.4 343.2 L741.0 348.2 L744.4 352.0 L745.7 356.4 L750.9 358.5 L754.5 362.4 L758.5 365.8 L761.8 371.4 L766.4 375.8 L765.9 383.7 L770.2 387.1 L773.0 391.0 L775.4 394.3 L775.5 398.6 L780.1 401.9 L783.3 406.0 L788.8 408.4 L792.5 411.7 L795.9 414.9 L797.6 418.0 L799.3 422.8 L800.3 428.4 L803.2 432.9 L804.1 438.1 L805.1 443.9 L804.6 449.7 L806.0 455.3M520.5 406.0 L521.1 411.4 L522.7 415.9 L523.1 420.9 L524.3 425.4 L525.5 430.3 L527.2 434.8 L527.5 438.5 L529.2 442.5 L531.0 447.5 L534.3 453.0 L536.3 457.9 L538.7 462.3 L540.1 468.0 L539.3 471.8 L537.1 476.6 L542.0 478.2 L545.0 480.7 L544.6 484.9 L539.3 486.3 L535.9 489.7 L533.7 495.7 L532.9 500.6 L532.2 505.4 L533.1 509.3 L532.8 514.0 L532.9 519.2 L532.3 524.7 L533.1 529.5 L532.4 534.4 L532.8 539.5 L532.9 545.4 L534.1 550.9 L532.7 555.1 L531.9 559.6 L529.8 563.6 L529.9 569.5 L528.8 575.8 L531.9 581.2 L534.2 586.3 L535.6 590.0 L536.8 595.0 L538.5 600.8 L539.6 605.8 L543.0 611.5 L545.3 616.5 L547.6 620.3M344.5 595.2 L343.4 600.7 L342.4 605.8 L345.9 610.1 L349.3 613.3 L352.3 616.9 L356.2 620.8 L357.5 625.6 L359.4 630.1 L357.7 634.3 L356.9 638.4 L358.7 644.2M744.0 631.6 L744.4 636.5 L745.2 640.6 L745.8 646.0 L747.8 650.0 L752.7 651.1 L757.1 650.0 L758.8 646.0 L758.3 641.0 L759.7 635.7 L758.0 630.4 L758.5 624.2 L757.4 618.1 L761.2 615.5 L762.8 610.7 L769.2 610.2 L773.2 612.0 L777.6 614.6 L781.3 615.3 L785.2 616.8 L791.5 617.8M185.8 594.4 L184.0 600.1 L183.7 605.9 L180.5 610.5 L178.8 616.3 L178.5 622.5 L179.7 628.4 L181.7 632.7 L185.5 636.2 L187.9 640.2 L189.9 644.4 L189.1 648.9 L191.5 652.2 L192.0 656.7 L194.6 660.9 L195.4 664.8 L196.0 669.0" stroke="#000"/>
</g>
<g clip-path="url(#mc)" fill="none" shape-rendering="geometricPrecision">
<circle cx="407" cy="407" r="159.8" stroke="#ececec" stroke-width="0.85"/>
<circle cx="407" cy="407" r="279.65" stroke="#ececec" stroke-width="0.85"/>
<circle cx="407" cy="407" r="399.5" stroke="#ececec" stroke-width="0.85"/>
<circle cx="407" cy="407" r="519.35" stroke="#ececec" stroke-width="0.85"/>
</g>
<g clip-path="url(#mc)">
<rect x="395.2" y="2.7" width="21" height="9" fill="#5e504b"/>
<text x="405.7" y="10.7" text-anchor="middle" font-family="DejaVu Sans, Liberation Sans, sans-serif" font-size="10.5" fill="#ffff80" shape-rendering="auto">313</text>
<rect x="395.2" y="123.0" width="21" height="9" fill="#5e504b"/>
<text x="405.7" y="131.0" text-anchor="middle" font-family="DejaVu Sans, Liberation Sans, sans-serif" font-size="10.5" fill="#ffff80" shape-rendering="auto">219</text>
<rect x="395.2" y="242.7" width="21" height="9" fill="#5e504b"/>
<text x="405.7" y="250.7" text-anchor="middle" font-family="DejaVu Sans, Liberation Sans, sans-serif" font-size="10.5" fill="#ffff80" shape-rendering="auto">125</text>
<rect x="398.7" y="363.0" width="14" height="9" fill="#5e504b"/>
<text x="405.7" y="371.0" text-anchor="middle" font-family="DejaVu Sans, Liberation Sans, sans-serif" font-size="10.5" fill="#ffff80" shape-rendering="auto">31</text>
<circle cx="407" cy="407" r="39.6" stroke="#ff0000" stroke-width="1.15" fill="none"/>
</g>
<path d="M447 71.5H454" stroke="#ff8c1a" stroke-width="1" fill="none"/>
<circle cx="533.5" cy="694.5" r="4.5" stroke="#ef9d00" fill="none" shape-rendering="auto"/><path d="M531 694.5H536" stroke="#ef9d00" fill="none"/>
<path d="M578 742.5H585" stroke="#ef9d00" fill="none"/>
</svg>
<div class="panel" style="left:812px;top:8px;width:318px;height:318px;"></div>
<div class="panel" style="left:812px;top:333px;width:318px;height:113px;"></div>
<div class="panel" style="left:812px;top:453px;width:318px;height:347px;"></div>
<div class="b" style="left:819px;top:16px;width:56px;height:16px;background:#500000;border:1px solid #c8c8c8;"></div>
<span class="t" style="font-size:11.6px;top:19px;color:#d8c8c8;font-weight:bold;letter-spacing:0.314px;left:824.5px;">STRIKE</span>
<div class="b" style="left:883px;top:16px;width:56px;height:16px;background:#333333;border:1px solid #c8c8c8;"></div>
<span class="t" style="font-size:11.6px;top:19px;color:#c0c0c0;font-weight:bold;letter-spacing:0.709px;left:890.5px;">NOISE</span>
<div class="b" style="left:994px;top:16px;width:126px;height:16px;background:#333333;border:1px solid #c8c8c8;"></div>
<span class="t" style="font-size:11.6px;top:19px;color:#ffffff;font-weight:bold;letter-spacing:0.292px;left:999px;">Bng 155°</span>
<span class="t" style="font-size:11.6px;top:19px;color:#00ee00;font-weight:bold;letter-spacing:0.556px;left:1075.5px;">351mi</span>
<div class="b" style="left:821px;top:64px;width:80px;height:14px;background:#5e5e5e;border:1px solid #d0d0d0;"></div>
<span class="t" style="font-size:11.7px;top:65.6px;color:#ffffff;letter-spacing:0.027px;left:829px;">Strikes/min</span>
<div class="b" style="left:931px;top:64px;width:80px;height:14px;background:#5e5e5e;border:1px solid #d0d0d0;"></div>
<span class="t" style="font-size:11.7px;top:65.6px;color:#ffffff;letter-spacing:-0.085px;left:943.3px;">Close/min</span>
<div class="b" style="left:1041px;top:64px;width:80px;height:14px;background:#5e5e5e;border:1px solid #d0d0d0;"></div>
<span class="t" style="font-size:11.7px;top:65.6px;color:#ffffff;letter-spacing:-0.228px;left:1050.5px;">Noises/min</span>
<span class="t" style="font-size:28px;top:85.6px;color:#ffffff;font-weight:bold;right:234.7px;">0</span>
<span class="t" style="font-size:28px;top:85.6px;color:#ffffff;font-weight:bold;right:124.7px;">0</span>
<span class="t" style="font-size:28px;top:85.6px;color:#c0c0c0;font-weight:bold;right:14.7px;">0</span>
<span class="t" style="font-size:12.6px;top:131px;color:#ffffff;letter-spacing:-0.018px;right:235.5px;margin-right:0.018px;">Total Strikes</span>
<span class="t" style="font-size:12.6px;top:131px;color:#ffffff;letter-spacing:0.124px;right:125px;margin-right:-0.124px;">Total Close</span>
<span class="t" style="font-size:12.6px;top:131px;color:#c0c0c0;letter-spacing:0.005px;right:15px;margin-right:-0.005px;">Total Noises</span>
<span class="t" style="font-size:12.6px;top:149px;color:#ffffff;right:235.5px;">8</span>
<span class="t" style="font-size:12.6px;top:149px;color:#ffffff;right:125px;">0</span>
<span class="t" style="font-size:12.6px;top:149px;color:#c0c0c0;right:15px;">8</span>
<span class="t" style="font-size:12.6px;top:202.5px;color:#c0c0c0;letter-spacing:-0.072px;left:821px;">Lightning type distribution</span>
<div class="b" style="left:821px;top:217px;width:302px;height:1px;background:#a0a0a0"></div>
<span class="t" style="font-size:12px;top:226px;color:#ffffff;font-weight:bold;letter-spacing:-0.664px;left:821px;">Cloud-ground</span>
<span class="t" style="font-size:11.8px;top:226px;color:#ffffff;left:912.3px;">+</span>
<div class="b" style="left:925px;top:227px;width:49px;height:9px;border:1px solid #b0b0b0;border-radius:2px;background:#000;overflow:hidden"><div style="width:18px;height:9px;background:#f00000"></div></div>
<span class="t" style="font-size:12px;top:226px;color:#ffffff;font-weight:bold;letter-spacing:0.139px;left:979.7px;">38%</span>
<span class="t" style="font-size:15px;top:222px;color:#d8d8d8;font-weight:bold;left:1016px;">-</span>
<div class="b" style="left:1028px;top:227px;width:49px;height:9px;border:1px solid #b0b0b0;border-radius:2px;background:#000;overflow:hidden"><div style="width:12px;height:9px;background:#88c8ff"></div></div>
<span class="t" style="font-size:12px;top:226px;color:#ffffff;font-weight:bold;letter-spacing:-0.011px;left:1083px;">25%</span>
<span class="t" style="font-size:12px;top:250px;color:#c0c0c0;font-weight:bold;letter-spacing:-0.468px;left:821px;">Count</span>
<span class="t" style="font-size:12px;top:250px;color:#ffffff;font-weight:bold;left:925.5px;">3</span>
<span class="t" style="font-size:12px;top:250px;color:#ffffff;font-weight:bold;left:1028.5px;">2</span>
<span class="t" style="font-size:12px;top:279.6px;color:#ffffff;font-weight:bold;letter-spacing:-0.652px;left:821px;">Intracloud</span>
<span class="t" style="font-size:11.8px;top:279.7px;color:#ffffff;left:912.3px;">+</span>
<div class="b" style="left:925px;top:281px;width:49px;height:9px;border:1px solid #b0b0b0;border-radius:2px;background:#000;overflow:hidden"><div style="width:0px;height:9px;background:#000"></div></div>
<span class="t" style="font-size:12px;top:279.6px;color:#ffffff;font-weight:bold;letter-spacing:0.627px;left:979.7px;">0%</span>
<span class="t" style="font-size:15px;top:275.6px;color:#d8d8d8;font-weight:bold;left:1016px;">-</span>
<div class="b" style="left:1028px;top:281px;width:49px;height:9px;border:1px solid #b0b0b0;border-radius:2px;background:#000;overflow:hidden"><div style="width:18px;height:9px;background:#00f000"></div></div>
<span class="t" style="font-size:12px;top:279.6px;color:#ffffff;font-weight:bold;letter-spacing:-0.011px;left:1083px;">38%</span>
<span class="t" style="font-size:12px;top:303.7px;color:#c0c0c0;font-weight:bold;letter-spacing:-0.468px;left:821px;">Count</span>
<span class="t" style="font-size:12px;top:303.7px;color:#ffffff;font-weight:bold;left:925.5px;">0</span>
<span class="t" style="font-size:12px;top:303.7px;color:#ffffff;font-weight:bold;left:1028.5px;">3</span>
<span class="t" style="font-size:16px;top:338px;color:#00ee00;font-weight:bold;letter-spacing:0.183px;left:822px;">1/31/2026 1:44:52 AM</span>
<div class="b" style="left:821px;top:358px;width:302px;height:1px;background:#909090"></div>
<span class="t" style="font-size:12.6px;top:376px;color:#ffffff;left:821px;">Squelch</span>
<span class="t" style="font-size:12.6px;top:376px;color:#ffffff;left:909.5px;">0</span>
<span class="t" style="font-size:12.6px;top:376px;color:#ffffff;left:981px;">Upload</span>
<span class="t" style="font-size:12.6px;top:376px;color:#c0c0c0;left:1061px;">Disabled</span>
<span class="t" style="font-size:12.6px;top:396px;color:#ffffff;left:821px;">Persistence</span>
<span class="t" style="font-size:12.6px;top:396px;color:#ffffff;letter-spacing:-0.560px;left:909.5px;">90 min</span>
<span class="t" style="font-size:12.6px;top:396px;color:#ffffff;left:981px;">Capture</span>
<span class="t" style="font-size:12.6px;top:396px;color:#00ee00;left:1061px;">Active</span>
<span class="t" style="font-size:12.6px;top:416px;color:#ffffff;left:821px;">Range</span>
<span class="t" style="font-size:12.6px;top:416px;color:#ffffff;letter-spacing:-0.566px;left:909.5px;">313 mi</span>
<span class="t" style="font-size:12.6px;top:416px;color:#ffffff;left:981px;">Receiver</span>
<span class="t" style="font-size:12.6px;top:416px;color:#00ee00;left:1061px;">Enabled</span>
<span class="t" style="font-size:12.6px;top:463px;color:#c0c0c0;left:821px;">Uptime</span>
<span class="t" style="font-size:12.6px;top:463px;color:#ffffff;left:909.5px;">469:29</span>
<span class="t" style="font-size:12.6px;top:463px;color:#c0c0c0;left:981px;">Peak time</span>
<span class="t" style="font-size:12.6px;top:463px;color:#c0c0c0;left:1061px;">Plot</span>
<span class="t" style="font-size:12.6px;top:486px;color:#c0c0c0;left:821px;">Peak rate</span>
<span class="t" style="font-size:12.6px;top:486px;color:#ffffff;left:909.5px;">2/min</span>
<span class="t" style="font-size:12.6px;top:486px;color:#ffffff;left:981px;">1:14 AM</span>
<span class="t" style="font-size:12.6px;top:486px;color:#ffffff;left:1061px;">Strike</span>
<span class="t" style="font-size:12.6px;top:516px;color:#c0c0c0;left:822.5px;">Trend graph</span>
<span class="t" style="font-size:12.6px;top:516px;color:#ffffff;left:908.5px;">60 min</span>
<svg style="left:0;top:0" width="1138" height="812" viewBox="0 0 1138 812" shape-rendering="crispEdges"><path d="M822.5 777.5H1088.5V542.5" fill="none" stroke="#d0d0d0" stroke-width="1"/><path d="M822.5 775V779M866.5 775V779M911.5 775V779M955.5 775V779M999.5 775V779M1044.5 775V779M1088.5 775V779M1085 542.5H1089M1085 581.5H1089M1085 621.5H1089M1085 660.5H1089M1085 699.5H1089M1085 739.5H1089M1085 778.5H1089" fill="none" stroke="#d0d0d0" stroke-width="1"/><path d="M886.5 777V771L888.5 761H891.5L892.5 769V777" fill="none" stroke="#fff"/><path d="M887.5 775L888.5 769H891.5L892.5 776" fill="none" stroke="#00e000"/><path d="M944.5 777V773L946.5 769H948.5" fill="none" stroke="#fff"/><path d="M946.5 777L948.5 761H951.5L954.5 777" fill="none" stroke="#fff"/><path d="M947.5 770V777" fill="none" stroke="#90c8f8"/><path d="M949.5 769H951.5L952.5 776" fill="none" stroke="#00e000"/><path d="M1010.5 777L1011.5 769H1014.5L1016.5 777" fill="none" stroke="#fff"/></svg>
<span class="t" style="font-size:12px;top:536px;color:#c0c0c0;letter-spacing:-0.770px;left:1092px;">30</span>
<span class="t" style="font-size:12px;top:614px;color:#c0c0c0;letter-spacing:-0.770px;left:1092px;">20</span>
<span class="t" style="font-size:12px;top:693px;color:#c0c0c0;letter-spacing:-0.770px;left:1092px;">10</span>
<span class="t" style="font-size:12px;top:782.5px;color:#c0c0c0;letter-spacing:-0.770px;left:820.5px;">60</span>
<span class="t" style="font-size:12px;top:782.5px;color:#c0c0c0;letter-spacing:-0.770px;left:864.7px;">50</span>
<span class="t" style="font-size:12px;top:782.5px;color:#c0c0c0;letter-spacing:-0.770px;left:909.5px;">40</span>
<span class="t" style="font-size:12px;top:782.5px;color:#c0c0c0;letter-spacing:-0.770px;left:954px;">30</span>
<span class="t" style="font-size:12px;top:782.5px;color:#c0c0c0;letter-spacing:-0.770px;left:998px;">20</span>
<span class="t" style="font-size:12px;top:782.5px;color:#c0c0c0;letter-spacing:-0.770px;left:1042.5px;">10</span>
<span class="t" style="font-size:12px;top:782.5px;color:#c0c0c0;left:1087.5px;">0</span>
<span class="t" style="font-size:12px;top:782.5px;color:#c0c0c0;letter-spacing:-1.815px;left:1100px;">min</span>
<div class="b" style="left:9px;top:759px;width:242px;height:42px;background:#000;border:1px solid #8c8c8c"></div>
<span class="t" style="font-size:9.6px;top:762px;color:#e8e8e8;font-family:'DejaVu Sans Condensed','DejaVu Sans',sans-serif;letter-spacing:-0.163px;left:13px;">Symbols</span>
<span class="t" style="font-size:9.6px;top:762px;color:#e8e8e8;font-family:'DejaVu Sans Condensed','DejaVu Sans',sans-serif;letter-spacing:0.578px;left:53px;">-CG</span>
<span class="t" style="font-size:9.6px;top:762px;color:#e8e8e8;font-family:'DejaVu Sans Condensed','DejaVu Sans',sans-serif;letter-spacing:1.152px;left:78px;">-IC</span>
<span class="t" style="font-size:9.6px;top:762px;color:#e8e8e8;font-family:'DejaVu Sans Condensed','DejaVu Sans',sans-serif;letter-spacing:0.018px;left:99px;">+CG</span>
<span class="t" style="font-size:9.6px;top:762px;color:#e8e8e8;font-family:'DejaVu Sans Condensed','DejaVu Sans',sans-serif;letter-spacing:0.792px;left:124.2px;">+IC</span>
<span class="t" style="font-size:9.6px;top:762px;color:#e8e8e8;font-family:'DejaVu Sans Condensed','DejaVu Sans',sans-serif;letter-spacing:-0.295px;left:153px;">Strike age color codes</span>
<span class="t" style="font-size:9.6px;top:774.7px;color:#e8e8e8;font-family:'DejaVu Sans Condensed','DejaVu Sans',sans-serif;letter-spacing:-0.362px;left:13px;">Recent</span>
<span class="t" style="font-size:9.6px;top:787.5px;color:#e8e8e8;font-family:'DejaVu Sans Condensed','DejaVu Sans',sans-serif;letter-spacing:-0.341px;left:13px;">Old</span>
<span class="t" style="font-size:9.6px;top:774.7px;color:#e8d800;font-family:'DejaVu Sans Condensed','DejaVu Sans',sans-serif;letter-spacing:-1.363px;left:153.7px;">15+</span>
<span class="t" style="font-size:9.6px;top:774.7px;color:#e0a000;font-family:'DejaVu Sans Condensed','DejaVu Sans',sans-serif;letter-spacing:-1.163px;left:188.6px;">30+</span>
<span class="t" style="font-size:9.6px;top:774.7px;color:#e08000;font-family:'DejaVu Sans Condensed','DejaVu Sans',sans-serif;letter-spacing:-1.113px;left:223px;">45+</span>
<span class="t" style="font-size:9.6px;top:787.5px;color:#d87000;font-family:'DejaVu Sans Condensed','DejaVu Sans',sans-serif;letter-spacing:-1.363px;left:153.7px;">60+</span>
<span class="t" style="font-size:9.6px;top:787.5px;color:#e06020;font-family:'DejaVu Sans Condensed','DejaVu Sans',sans-serif;letter-spacing:-1.163px;left:188.6px;">75+</span>
<span class="t" style="font-size:9.6px;top:787.5px;color:#e03000;font-family:'DejaVu Sans Condensed','DejaVu Sans',sans-serif;letter-spacing:-1.113px;left:223px;">90+</span>
<svg style="left:0;top:0" width="1138" height="812" viewBox="0 0 1138 812"><g stroke="#00e8e8" fill="none" stroke-width="1"><circle cx="60.5" cy="780.5" r="4.2"/><path d="M58 780.5H63" shape-rendering="crispEdges"/><path d="M82 780.5H89" shape-rendering="crispEdges"/><circle cx="110.5" cy="780.5" r="4.2"/><path d="M108 780.5H113M110.5 778V783" shape-rendering="crispEdges"/><path d="M131.5 780.5H139M135.5 777V784" shape-rendering="crispEdges"/></g><g stroke="#e8e800" fill="none" stroke-width="1"><circle cx="60.5" cy="793.5" r="4.2"/><path d="M58 793.5H63" shape-rendering="crispEdges"/><path d="M82 793.5H89" shape-rendering="crispEdges"/><circle cx="110.5" cy="793.5" r="4.2"/><path d="M108 793.5H113M110.5 791V796" shape-rendering="crispEdges"/><path d="M131.5 793.5H139M135.5 790V797" shape-rendering="crispEdges"/></g></svg>
<div class="b" style="left:685px;top:792px;width:121px;height:14px;background:#000"></div>
<span class="t" style="font-size:9.6px;top:793px;color:#f0f0f0;font-family:'DejaVu Sans Condensed','DejaVu Sans',sans-serif;letter-spacing:-0.267px;left:689.3px;">©2005 Astrogenic Systems</span>
</body></html>
